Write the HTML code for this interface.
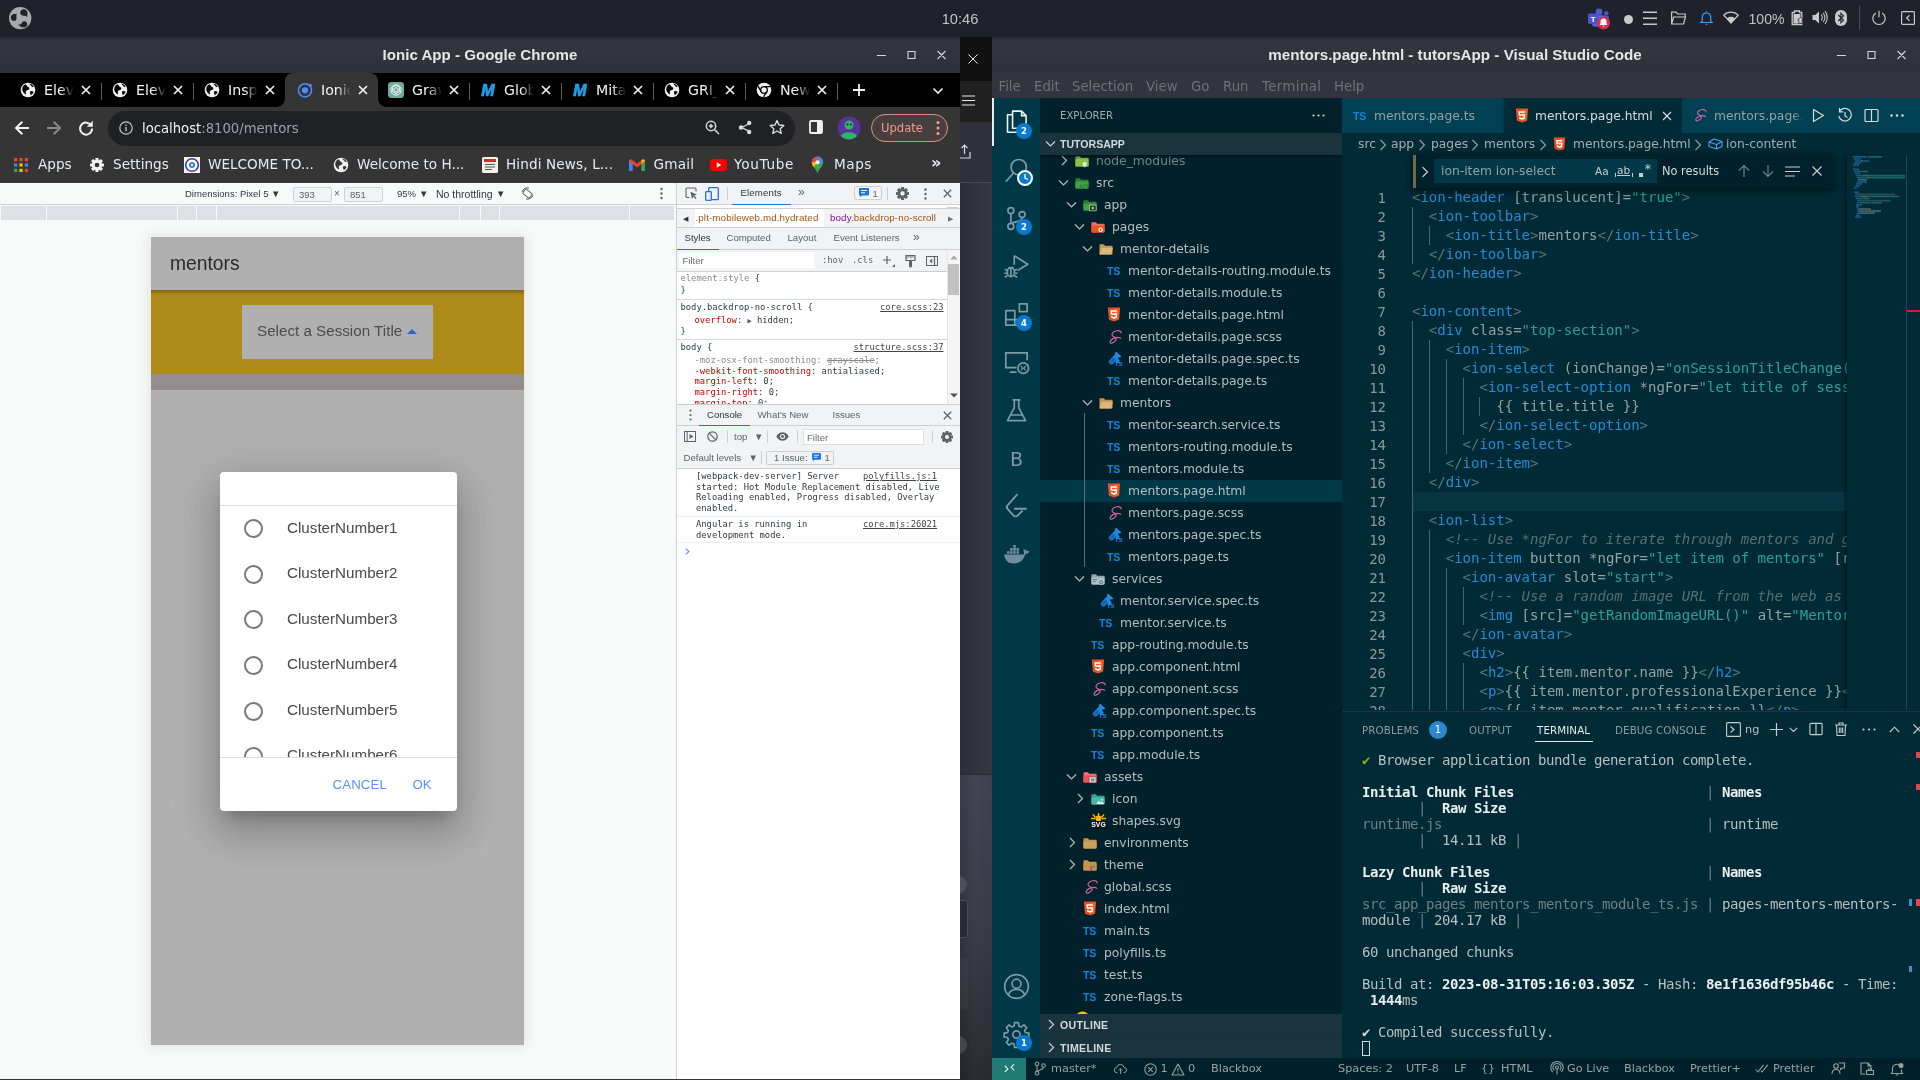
<!DOCTYPE html>
<html lang="en">
<head>
<meta charset="utf-8">
<title>Ionic App - Google Chrome</title>
<style>
*{box-sizing:border-box;margin:0;padding:0}
html,body{width:1920px;height:1080px;overflow:hidden;background:#1f212b}
body{position:relative;font-family:"DejaVu Sans","Liberation Sans",sans-serif;font-size:12.3px;color:#d8d8d8;-webkit-font-smoothing:antialiased}
.abs{position:absolute}
.ui{font-family:"DejaVu Sans","Liberation Sans",sans-serif}
.mono{font-family:"DejaVu Sans Mono","Liberation Mono",monospace}
.arial{font-family:"Liberation Sans","DejaVu Sans",sans-serif}
.nw{white-space:nowrap}
svg{display:block;overflow:visible}
/* top panel */
#panel{left:0;top:0;width:1920px;height:37px;background:#1f212b}
/* windows */
#chrome{left:0;top:37px;width:960px;height:1043px;background:#353535;overflow:hidden}
#strip{left:960px;top:37px;width:32px;height:1043px;background:#2f303b;overflow:hidden}
#vsc{left:992px;top:37px;width:928px;height:1043px;background:#002b36;overflow:hidden}
.tbar{left:0;top:0;width:100%;height:36px;background:linear-gradient(#282931 0,#33353f 3px,#2e303a 100%);color:#e6e6e6;font-weight:bold;text-align:center;white-space:nowrap}
</style>
</head>
<body>
<div id="root" style="position:absolute;left:0;top:0;width:1920px;height:1080px;will-change:transform">
<div id="panel" class="abs">
  <svg class="abs" style="left:9px;top:7px" width="23" height="23" viewBox="0 0 23 23">
    <circle cx="11.200" cy="11.100" r="11.200" fill="#a9a9ad"/>
    <path d="M14.700 2.300c2.200 0 3.700 1.700 3.700 3.700 0 1.500-.3 2.600-.1 4.200-1-1.300-1.800-1.500-3.600-1.500-2 0-3.500-1.400-3.500-3.200s1.500-3.200 3.500-3.200z" fill="#1f212b"/>
    <path d="M1.800 10.600c0-2 1.500-3.600 3.600-3.600 1 0 1.800.2 2.800-.2-.9 1.100-1.100 2-.7 3.600.5 1.900-.7 3.600-2.500 3.600S1.800 12.600 1.800 10.600z" fill="#1f212b"/>
    <path d="M13.400 20.300c-1.800 0-3.200-1.200-4.100-3.200 1.300.8 2.500.4 3.400-1.100.9-1.600 2.700-2.200 4.100-1.300s2 3 1 4.300c-.9 1.300-2.600 1.300-4.400 1.300z" fill="#1f212b"/>
  </svg>
  <div class="abs arial nw" style="left:930px;top:10px;width:60px;text-align:center;font-size:14.600px;color:#c3c4c8;line-height:18px">10:46</div>
  <!-- teams -->
  <svg class="abs" style="left:1587px;top:7px" width="25" height="23" viewBox="0 0 25 23">
    <circle cx="12" cy="5" r="3.4" fill="#5059c9"/>
    <circle cx="19.3" cy="6.2" r="2.3" fill="#4b53bc"/>
    <rect x="13" y="8.5" width="9" height="9" rx="2.5" fill="#4b53bc"/>
    <rect x="5" y="8.2" width="12.5" height="11.5" rx="3" fill="#5b62d3"/>
    <rect x="1" y="6.5" width="10.5" height="10.5" rx="1.5" fill="#4854c7"/>
    <text x="6.2" y="14.8" font-family="Liberation Sans,sans-serif" font-weight="bold" font-size="8" fill="#fff" text-anchor="middle">T</text>
    <circle cx="16.5" cy="16" r="6.5" fill="#e0294e"/>
    <path d="M16.5 11.6c-2 0-3 1.5-3 3.2v2l-1 1.3h8l-1-1.300v-2c0-1.700-1-3.200-3-3.200zM15.500 18.700a1 1 0 0 0 2 0z" fill="#fff"/>
  </svg>
  <div class="abs" style="left:1623.500px;top:14.500px;width:9.500px;height:9.500px;border-radius:50%;background:#c9c9cc"></div>
  <svg class="abs" style="left:1643px;top:10px" width="14" height="16" viewBox="0 0 14 16" stroke="#c9c9cc" stroke-width="1.500"><path d="M0 2.200h14M0 8.300h14M0 14.200h14"/></svg>
  <svg class="abs" style="left:1671px;top:11px" width="15" height="14" viewBox="0 0 15 14" fill="none" stroke="#c9c9cc" stroke-width="1.200"><path d="M.6 13V1.200h4.500l1.500 1.800h7.600v3M.6 13l2-7h11.800l-1.800 7z"/></svg>
  <svg class="abs" style="left:1700px;top:10px" width="13" height="15" viewBox="0 0 13 15" fill="none" stroke="#3d9cf0" stroke-width="1.200"><path d="M6.500 1.200v1M2.300 11V7.200c0-2.600 1.800-4.200 4.200-4.200s4.200 1.600 4.200 4.200V11l1.500 1.500H.8zM5.700 14.300h1.600"/></svg>
  <svg class="abs" style="left:1723px;top:11px" width="16" height="13" viewBox="0 0 16 13"><path d="M8 12.200L.8 4.200C2.800 2.200 5.300 1.200 8 1.200s5.200 1 7.200 3z" fill="none" stroke="#c9c9cc" stroke-width="1.200"/><path d="M8 12.200L3.800 7.500C5 6.400 6.400 5.800 8 5.800s3 .6 4.200 1.700z" fill="#c9c9cc"/></svg>
  <div class="abs arial nw" style="left:1748.500px;top:9.500px;font-size:14.100px;color:#c3c4c8;line-height:18px">100%</div>
  <svg class="abs" style="left:1791px;top:10px" width="13" height="15" viewBox="0 0 13 15"><path d="M3.500 1h5v1.500h2.300v12H1.200v-12h2.300z" fill="none" stroke="#c9c9cc" stroke-width="1.300"/><rect x="2.500" y="4" width="7" height="9.500" fill="#c9c9cc"/><path d="M9.500 7.500l3 2.500h-1.300v3.500h-3.400V10H6.500z" fill="#c9c9cc" stroke="#1f212b" stroke-width=".7"/></svg>
  <svg class="abs" style="left:1812px;top:10px" width="15" height="15" viewBox="0 0 15 15"><path d="M.5 5h2.700L7 1.500v12L3.200 10H.5z" fill="#c9c9cc"/><path d="M9 4.500c1.500 1.700 1.500 4.300 0 6M11 2.800c2.500 2.700 2.500 6.700 0 9.400M13 1.200c3 3.700 3 8.900 0 12.600" fill="none" stroke="#c9c9cc" stroke-width="1.100"/></svg>
  <svg class="abs" style="left:1834.500px;top:10px" width="12" height="16" viewBox="0 0 12 16"><rect x="0" y="0" width="12" height="16" rx="6" fill="#c9c9cc"/><path d="M3.300 5l5.200 5.300-2.600 2.500V3.200l2.600 2.500L3.300 11" fill="none" stroke="#1f212b" stroke-width="1.100"/></svg>
  <div class="abs" style="left:1859px;top:6px;width:1px;height:24px;background:#4a4c57"></div>
  <svg class="abs" style="left:1871.500px;top:10px" width="14" height="15" viewBox="0 0 14 15" fill="none" stroke="#c9c9cc" stroke-width="1.200"><path d="M7 .8v6.400M3.800 3A6.200 6.200 0 1 0 10.200 3"/></svg>
  <svg class="abs" style="left:1901px;top:11px" width="14" height="14" viewBox="0 0 14 14" fill="none" stroke="#c9c9cc" stroke-width="1.200"><rect x=".6" y=".6" width="12.800" height="12.800" rx="1"/><path d="M8.600 4.200L5.600 7l3 2.800"/></svg>
</div>
<div id="chrome" class="abs">
<style>
#chrome .tabs{left:0;top:36px;width:960px;height:34px;background:#000}
#chrome .tab{top:0;height:34px;width:92px}
#chrome .tab .fav{left:20px;top:9px;width:16px;height:16px}
#chrome .tab .tt{left:44px;top:7px;width:30px;height:20px;overflow:hidden;white-space:nowrap;font-size:14.2px;line-height:20px;color:#f1f1f1;-webkit-mask-image:linear-gradient(90deg,#000 55%,transparent 100%);mask-image:linear-gradient(90deg,#000 55%,transparent 100%)}
#chrome .tab .tx{left:80px;top:11px}
#chrome .tsep{top:10px;width:1px;height:17px;background:#5a5a5a}
#chrome .tool{left:0;top:70px;width:960px;height:40px;background:#353535}
#chrome .bm{left:0;top:110px;width:960px;height:36px;background:#353535;font-size:13.600px;color:#e8eaed;line-height:20px}
#chrome .bm span{position:absolute;top:7px;white-space:nowrap}
</style>
<div class="abs tbar arial" style="font-size:15.100px;line-height:36px">Ionic App - Google Chrome</div>
<svg class="abs" style="left:876px;top:12px" width="72" height="12" viewBox="0 0 72 12" fill="none" stroke="#d6d6d9" stroke-width="1.100"><path d="M1 6.500h9M32 2.500h7v7h-7zM61.500 2l8 8M69.500 2l-8 8"/></svg>
<div class="abs tabs">
  <!-- active tab -->
  <div class="abs" style="left:285px;top:0;width:93px;height:34px;background:#353535;border-radius:8px 8px 0 0"></div>
  <div class="abs" style="left:277px;top:26px;width:8px;height:8px;background:radial-gradient(circle at 0 0,#000 7.500px,#353535 8px)"></div>
  <div class="abs" style="left:378px;top:26px;width:8px;height:8px;background:radial-gradient(circle at 100% 0,#000 7.500px,#353535 8px)"></div>
<div class="abs tab" style="left:0px"><svg class="abs fav" viewBox="0 0 16 16"><circle cx="8" cy="8" r="7.300" fill="#f1f1f1"/><path d="M5.500 2.200c1.500.8 1.200 2.300 2.600 2.800 1.400.5 1.700 1.600.8 2.600-.9 1-2.400.4-3 1.600-.5 1.200.6 2.300-.2 3.200-1-.5-2.700-2-3.300-3.800C1.800 6 3 3.200 5.500 2.200zM10.200 9.500c1-.8 2.400-.3 3.400.5-.5 1.500-1.800 2.800-3 3.300.3-1.300-1.200-2.400-.4-3.800zM9.500 1.500c2 .4 3.500 1.800 4.200 3.500-1 .2-2-.3-2.600-1.200-.5-.8-1.500-1-1.600-2.300z" fill="#000"/></svg><div class="abs tt">Eleva</div><svg class="abs tx" width="12" height="12" viewBox="0 0 12 12" stroke="#f1f1f1" stroke-width="1.700"><path d="M2 2l8 8M10 2l-8 8"/></svg></div>
<div class="abs tab" style="left:92px"><svg class="abs fav" viewBox="0 0 16 16"><circle cx="8" cy="8" r="7.300" fill="#f1f1f1"/><path d="M5.500 2.200c1.500.8 1.200 2.300 2.600 2.800 1.400.5 1.700 1.600.8 2.600-.9 1-2.400.4-3 1.600-.5 1.200.6 2.300-.2 3.200-1-.5-2.700-2-3.300-3.800C1.800 6 3 3.200 5.500 2.200zM10.200 9.500c1-.8 2.400-.3 3.400.5-.5 1.500-1.800 2.800-3 3.300.3-1.300-1.200-2.400-.4-3.800zM9.500 1.500c2 .4 3.500 1.800 4.200 3.500-1 .2-2-.3-2.600-1.200-.5-.8-1.500-1-1.600-2.300z" fill="#000"/></svg><div class="abs tt">Eleva</div><svg class="abs tx" width="12" height="12" viewBox="0 0 12 12" stroke="#f1f1f1" stroke-width="1.700"><path d="M2 2l8 8M10 2l-8 8"/></svg></div>
<div class="abs tab" style="left:184px"><svg class="abs fav" viewBox="0 0 16 16"><circle cx="8" cy="8" r="7.300" fill="#f1f1f1"/><path d="M5.500 2.200c1.500.8 1.200 2.300 2.600 2.800 1.400.5 1.700 1.600.8 2.600-.9 1-2.400.4-3 1.600-.5 1.200.6 2.300-.2 3.200-1-.5-2.700-2-3.300-3.800C1.800 6 3 3.200 5.500 2.200zM10.200 9.500c1-.8 2.400-.3 3.400.5-.5 1.500-1.800 2.800-3 3.300.3-1.300-1.200-2.400-.4-3.800zM9.500 1.500c2 .4 3.500 1.800 4.200 3.500-1 .2-2-.3-2.600-1.200-.5-.8-1.500-1-1.600-2.300z" fill="#000"/></svg><div class="abs tt">Inspe</div><svg class="abs tx" width="12" height="12" viewBox="0 0 12 12" stroke="#f1f1f1" stroke-width="1.700"><path d="M2 2l8 8M10 2l-8 8"/></svg></div>
<div class="abs tab" style="left:277px"><svg class="abs fav" viewBox="0 0 16 16"><circle cx="8" cy="8.300" r="6.600" fill="none" stroke="#4d8dff" stroke-width="1.500"/><circle cx="8" cy="8.300" r="3.100" fill="#4d8dff"/><circle cx="13.300" cy="3.200" r="1.500" fill="#4d8dff"/></svg><div class="abs tt">Ionic</div><svg class="abs tx" width="12" height="12" viewBox="0 0 12 12" stroke="#f1f1f1" stroke-width="1.700"><path d="M2 2l8 8M10 2l-8 8"/></svg></div>
<div class="abs tab" style="left:368px"><svg class="abs fav" viewBox="0 0 16 16"><rect x="0" y="0" width="16" height="16" rx="3.500" fill="#74aa9c"/><g fill="none" stroke="#e9f3f0" stroke-width="1"><path d="M8 3.200l3.600 2.100v4.200L8 11.600 4.400 9.500V5.300z"/><path d="M8 5.500l2 1.200v2.400l-2 1.200-2-1.200V6.700z"/><circle cx="8" cy="8" r="5.200"/></g></svg><div class="abs tt">Grav</div><svg class="abs tx" width="12" height="12" viewBox="0 0 12 12" stroke="#f1f1f1" stroke-width="1.700"><path d="M2 2l8 8M10 2l-8 8"/></svg></div>
<div class="abs tab" style="left:460px"><svg class="abs fav" viewBox="0 0 16 16"><text x="8" y="13.500" text-anchor="middle" font-family="Liberation Sans,sans-serif" font-weight="bold" font-style="italic" font-size="16" fill="#1fa0ea" stroke="#1fa0ea" stroke-width=".7">M</text></svg><div class="abs tt">Glob</div><svg class="abs tx" width="12" height="12" viewBox="0 0 12 12" stroke="#f1f1f1" stroke-width="1.700"><path d="M2 2l8 8M10 2l-8 8"/></svg></div>
<div class="abs tab" style="left:552px"><svg class="abs fav" viewBox="0 0 16 16"><text x="8" y="13.500" text-anchor="middle" font-family="Liberation Sans,sans-serif" font-weight="bold" font-style="italic" font-size="16" fill="#1fa0ea" stroke="#1fa0ea" stroke-width=".7">M</text></svg><div class="abs tt">Mita</div><svg class="abs tx" width="12" height="12" viewBox="0 0 12 12" stroke="#f1f1f1" stroke-width="1.700"><path d="M2 2l8 8M10 2l-8 8"/></svg></div>
<div class="abs tab" style="left:644px"><svg class="abs fav" viewBox="0 0 16 16"><circle cx="8" cy="8" r="7.300" fill="#f1f1f1"/><path d="M5.500 2.200c1.500.8 1.200 2.300 2.600 2.800 1.400.5 1.700 1.600.8 2.600-.9 1-2.400.4-3 1.600-.5 1.200.6 2.300-.2 3.200-1-.5-2.700-2-3.300-3.800C1.800 6 3 3.200 5.500 2.200zM10.200 9.500c1-.8 2.400-.3 3.400.5-.5 1.500-1.800 2.800-3 3.300.3-1.300-1.200-2.400-.4-3.800zM9.500 1.500c2 .4 3.500 1.800 4.200 3.500-1 .2-2-.3-2.600-1.200-.5-.8-1.500-1-1.600-2.300z" fill="#000"/></svg><div class="abs tt">GRI_</div><svg class="abs tx" width="12" height="12" viewBox="0 0 12 12" stroke="#f1f1f1" stroke-width="1.700"><path d="M2 2l8 8M10 2l-8 8"/></svg></div>
<div class="abs tab" style="left:736px"><svg class="abs fav" viewBox="0 0 16 16"><circle cx="8" cy="8" r="7.300" fill="#f1f1f1"/><circle cx="8" cy="8" r="3.300" fill="#f1f1f1" stroke="#000" stroke-width="1.300"/><path d="M8 4.700h6.500M5.200 9.700L2 4.200M10.800 9.700L7.500 15" stroke="#000" stroke-width="1.300"/></svg><div class="abs tt">New </div><svg class="abs tx" width="12" height="12" viewBox="0 0 12 12" stroke="#f1f1f1" stroke-width="1.700"><path d="M2 2l8 8M10 2l-8 8"/></svg></div>
<div class="abs tsep" style="left:101px"></div>
<div class="abs tsep" style="left:193px"></div>
<div class="abs tsep" style="left:469px"></div>
<div class="abs tsep" style="left:561px"></div>
<div class="abs tsep" style="left:653px"></div>
<div class="abs tsep" style="left:745px"></div>
<div class="abs tsep" style="left:837px"></div>
<svg class="abs" style="left:852px;top:10px" width="14" height="14" viewBox="0 0 14 14" stroke="#f1f1f1" stroke-width="1.800"><path d="M7 1v12M1 7h12"/></svg>
<svg class="abs" style="left:932px;top:14px" width="12" height="8" viewBox="0 0 12 8" fill="none" stroke="#f1f1f1" stroke-width="1.600"><path d="M1.500 1.500L6 6l4.500-4.500"/></svg>
</div>
<div class="abs tool">
  <svg class="abs" style="left:14px;top:13px" width="16" height="16" viewBox="0 0 16 16" fill="none" stroke="#f1f1f1" stroke-width="2"><path d="M15 8H2.500M8.300 1.800L2 8l6.300 6.200"/></svg>
  <svg class="abs" style="left:46px;top:13px" width="16" height="16" viewBox="0 0 16 16" fill="none" stroke="#8a8a8a" stroke-width="2"><path d="M1 8h12.500M7.700 1.800L14 8l-6.300 6.200"/></svg>
  <svg class="abs" style="left:78px;top:13px" width="16" height="16" viewBox="0 0 16 16" fill="none" stroke="#f1f1f1" stroke-width="2"><path d="M13.300 5.800A6 6 0 1 0 14 8.500"/><path d="M14.800 .8v6H8.800z" fill="#f1f1f1" stroke="none"/></svg>
  <div class="abs" style="left:108px;top:4px;width:687px;height:35px;border-radius:17.500px;background:#202124"></div>
  <svg class="abs" style="left:119px;top:14px" width="14" height="14" viewBox="0 0 14 14"><circle cx="7" cy="7" r="6.200" fill="none" stroke="#c4c4c4" stroke-width="1.200"/><path d="M7 6v4.300M7 3.400v1.400" stroke="#c4c4c4" stroke-width="1.400"/></svg>
  <div class="abs nw" style="left:142px;top:12px;font-size:13.200px;line-height:20px;color:#f1f1f1">localhost<span style="color:#9aa0a6">:8100/mentors</span></div>
  <svg class="abs" style="left:705px;top:13px" width="15" height="15" viewBox="0 0 15 15" fill="none" stroke="#d9d9d9" stroke-width="1.500"><circle cx="6" cy="6" r="4.700"/><path d="M9.500 9.500L14 14M3.800 6h4.400M6 3.800v4.400"/></svg>
  <svg class="abs" style="left:738px;top:13px" width="14" height="15" viewBox="0 0 14 15"><path d="M10.800 4L3.600 7.500l7.200 3.600" fill="none" stroke="#d9d9d9" stroke-width="1.300"/><circle cx="11.200" cy="3" r="2.200" fill="#d9d9d9"/><circle cx="3" cy="7.500" r="2.200" fill="#d9d9d9"/><circle cx="11.200" cy="12" r="2.200" fill="#d9d9d9"/></svg>
  <svg class="abs" style="left:769px;top:12px" width="16" height="16" viewBox="0 0 16 16"><path d="M8 1.500l2 4.500 4.800.5-3.600 3.300 1 4.700L8 12l-4.200 2.500 1-4.700L1.200 6.500 6 6z" fill="none" stroke="#d9d9d9" stroke-width="1.400" stroke-linejoin="round"/></svg>
  <svg class="abs" style="left:809px;top:13px" width="14" height="14" viewBox="0 0 14 14"><rect x="1" y="1" width="12" height="12" rx="1" fill="none" stroke="#f1f1f1" stroke-width="1.800"/><rect x="8" y="1" width="5" height="12" fill="#f1f1f1"/></svg>
  <svg class="abs" style="left:837px;top:9px" width="24" height="24" viewBox="0 0 24 24"><circle cx="12" cy="12" r="11.500" fill="#5a2f9e"/><circle cx="12" cy="9" r="4.500" fill="#2db36a"/><path d="M4 20c1.500-5 14.500-5 16 0a11 11 0 0 1-16 0z" fill="#2db36a"/><circle cx="10.500" cy="8.500" r="1" fill="#123"/><circle cx="13.800" cy="8.500" r="1" fill="#123"/></svg>
  <div class="abs nw" style="left:871px;top:7px;width:77px;height:28px;border:1px solid #e08e84;border-radius:14px;background:rgba(238,154,143,.10);color:#ee9a8f;font-size:11.600px;line-height:26px;padding-left:9px">Update</div>
  <svg class="abs" style="left:936px;top:13px" width="4" height="16" viewBox="0 0 4 16" fill="#ee9a8f"><circle cx="2" cy="2.500" r="1.600"/><circle cx="2" cy="8" r="1.600"/><circle cx="2" cy="13.500" r="1.600"/></svg>
</div>
<div class="abs bm">
  <svg class="abs" style="left:14px;top:11px" width="14" height="14" viewBox="0 0 14 14"><g fill="#ea4335"><rect x="0" y="0" width="3.200" height="3.200"/><rect x="5.400" y="0" width="3.200" height="3.200"/><rect x="10.800" y="0" width="3.200" height="3.200"/></g><g><rect x="0" y="5.400" width="3.200" height="3.200" fill="#4285f4"/><rect x="5.400" y="5.400" width="3.200" height="3.200" fill="#fbbc05"/><rect x="10.800" y="5.400" width="3.200" height="3.200" fill="#4285f4"/><rect x="0" y="10.800" width="3.200" height="3.200" fill="#34a853"/><rect x="5.400" y="10.800" width="3.200" height="3.200" fill="#fbbc05"/><rect x="10.800" y="10.800" width="3.200" height="3.200" fill="#ea4335"/></g></svg>
  <span style="left:38px">Apps</span>
  <svg class="abs" style="left:90px;top:11px" width="14" height="14" viewBox="0 0 14 14"><g transform="translate(7 7)"><g fill="#f1f1f1"><rect x="-1.600" y="-7" width="3.200" height="14" rx=".6"/><rect x="-1.600" y="-7" width="3.200" height="14" rx=".6" transform="rotate(45)"/><rect x="-1.600" y="-7" width="3.200" height="14" rx=".6" transform="rotate(90)"/><rect x="-1.600" y="-7" width="3.200" height="14" rx=".6" transform="rotate(135)"/><circle r="5.200"/></g><circle r="2.300" fill="#353535"/></g></svg>
  <span style="left:113px">Settings</span>
  <svg class="abs" style="left:184px;top:10px" width="16" height="16" viewBox="0 0 16 16"><rect width="16" height="16" fill="#f4f4f8"/><circle cx="8" cy="8" r="6.300" fill="#fff" stroke="#3a3fa0" stroke-width="1.600"/><circle cx="8" cy="8" r="3" fill="#2f7fd6"/><circle cx="8" cy="8" r="1.200" fill="#fff"/></svg>
  <span style="left:208px">WELCOME TO...</span>
  <svg class="abs" style="left:333px;top:10px" width="16" height="16" viewBox="0 0 16 16"><circle cx="8" cy="8" r="7.300" fill="#f1f1f1"/><path d="M5.500 2.200c1.500.8 1.200 2.300 2.600 2.800 1.400.5 1.700 1.600.8 2.600-.9 1-2.400.4-3 1.600-.5 1.200.6 2.300-.2 3.200-1-.5-2.700-2-3.300-3.800C1.800 6 3 3.200 5.500 2.200zM10.200 9.500c1-.8 2.400-.3 3.400.5-.5 1.500-1.800 2.800-3 3.300.3-1.300-1.200-2.400-.4-3.800zM9.500 1.500c2 .4 3.500 1.800 4.200 3.500-1 .2-2-.3-2.600-1.200-.5-.8-1.500-1-1.600-2.300z" fill="#353535"/></svg>
  <span style="left:357px">Welcome to H...</span>
  <svg class="abs" style="left:482px;top:10px" width="16" height="16" viewBox="0 0 16 16"><rect width="16" height="16" rx="1.500" fill="#f3efe9"/><rect x="2" y="2" width="12" height="3" fill="#c33"/><path d="M3 7.500h10M3 10h10M3 12.500h7" stroke="#555" stroke-width="1.200"/></svg>
  <span style="left:506px;letter-spacing:.12px">Hindi News, L...</span>
  <svg class="abs" style="left:629px;top:12px" width="16" height="12" viewBox="0 0 16 12"><path d="M0 12V1.500L1.800 0 8 4.800 14.200 0 16 1.500V12h-3.500V5L8 8.500 3.500 5v7z" fill="#ea4335"/><path d="M0 12V1.500L3.500 5v7z" fill="#4285f4"/><path d="M16 12V1.500L12.500 5v7z" fill="#34a853"/><path d="M12.500 5L16 1.500 14.200 0 12.500 1.300z" fill="#fbbc05"/></svg>
  <span style="left:653.500px;letter-spacing:.2px">Gmail</span>
  <svg class="abs" style="left:710px;top:12px" width="17" height="12" viewBox="0 0 17 12"><rect width="17" height="12" rx="3.200" fill="#f00"/><path d="M6.800 3.200L11.300 6 6.800 8.800z" fill="#fff"/></svg>
  <span style="left:734px;letter-spacing:.7px">YouTube</span>
  <svg class="abs" style="left:811px;top:9px" width="13" height="18" viewBox="0 0 13 18"><path d="M6.500 17.500C5.500 13 .8 10.500.8 6.300a5.700 5.700 0 0 1 11.400 0c0 4.200-4.700 6.700-5.700 11.200z" fill="#34a853"/><path d="M6.500.6A5.700 5.700 0 0 0 .8 6.300L6.500 6.300z" fill="#ea4335"/><path d="M6.500.6a5.700 5.700 0 0 1 5.700 5.700H6.500z" fill="#4285f4"/><path d="M.8 6.300c0 1.800.9 3.300 2 4.700l3.700-4.700z" fill="#fbbc05"/><circle cx="6.500" cy="6.300" r="2.100" fill="#fff"/></svg>
  <span style="left:834px;letter-spacing:.55px">Maps</span>
  <span style="left:931px;top:6px;font-size:16px;font-weight:bold">»</span>
</div>
<div class="abs" style="left:0;top:145px;width:960px;height:1px;background:#3c3c3c"></div>
<style>
#emu{left:0;top:146px;width:677px;height:896px;background:#f8f9f9;overflow:hidden;color:#303942}
#emu .dt{left:0;top:0;width:676px;height:22px;background:#f8f9f9;border-bottom:1px solid #cdcfd3;font-family:"Liberation Sans",sans-serif;font-size:9.500px;line-height:22px;color:#303942}
#emu .dt span{position:absolute;top:0;white-space:nowrap}
#emu .inp{top:3.500px;width:39px;height:15px;border:1px solid #d0d3d6;border-radius:2px;background:#f1f3f4;font-family:"Liberation Sans",sans-serif;font-size:9.500px;line-height:13px;padding-left:5px;color:#5f6368}
#emu .mq{left:1px;top:23px;width:673px;height:14px;background:#dee1e6}
#emu .mq i{position:absolute;top:0;width:1px;height:14px;background:#fbfbfc}
#phone{left:151px;top:90px;width:373px;height:808px;background:#b0b0b0;overflow:hidden;box-shadow:0 0 12px 2px rgba(0,0,0,.09)}
#phone .lbl{font-size:15.200px;color:#4a4a4a;white-space:nowrap;line-height:20px}
#phone .rad{left:24px;width:19px;height:19px;border-radius:50%;border:2px solid #7a7a7a}
</style>
<div id="emu" class="abs">
  <div class="abs dt" style="top:0">
    <span style="left:185px">Dimensions: Pixel 5</span><span style="left:271px;font-size:9.500px">▼</span>
    <div class="abs inp" style="left:293px">393</div>
    <span style="left:334px;font-size:10px;color:#5f6368">×</span>
    <div class="abs inp" style="left:344px">851</div>
    <span style="left:397px">95%</span><span style="left:419px;font-size:9.500px">▼</span>
    <span style="left:436px;font-size:10.500px">No throttling</span><span style="left:496px;font-size:9.500px">▼</span>
    <svg class="abs" style="left:521px;top:4px" width="13" height="13" viewBox="0 0 13 13" fill="none" stroke="#5f6368" stroke-width="1"><rect x="2.300" y="3.800" width="8.500" height="5.500" rx="1" transform="rotate(40 6.500 6.500)"/><path d="M1 5A5.800 5.800 0 0 1 8 1M12 8a5.800 5.800 0 0 1-7 4"/></svg>
    <svg class="abs" style="left:660px;top:4px" width="3" height="13" viewBox="0 0 3 13" fill="#5f6368"><circle cx="1.500" cy="2" r="1.200"/><circle cx="1.500" cy="6.500" r="1.200"/><circle cx="1.500" cy="11" r="1.200"/></svg>
  </div>
  <div class="abs mq" style="top:23px"><i style="left:45px"></i><i style="left:176px"></i><i style="left:195px"></i><i style="left:215px"></i><i style="left:458px"></i><i style="left:479px"></i><i style="left:498px"></i><i style="left:628px"></i></div>
  <div id="phone" class="abs arial" style="top:54px">
    <!-- app header -->
    <div class="abs" style="left:0;top:0;width:373px;height:53px;background:#b0b0b0"></div>
    <div class="abs nw" style="left:19px;top:14px;font-size:19.300px;line-height:26px;color:#2b2b2b">mentors</div>
    <!-- gold section -->
    <div class="abs" style="left:0;top:53px;width:373px;height:84px;background:#ad8a1a"></div>
    <div class="abs" style="left:0;top:53px;width:373px;height:5px;background:linear-gradient(rgba(60,40,0,.38),rgba(60,40,0,0))"></div>
    <div class="abs" style="left:91px;top:68px;width:191px;height:54px;background:#b0b0b0"></div>
    <div class="abs lbl" style="left:106px;top:84px;color:#4c4c4c">Select a Session Title</div>
    <svg class="abs" style="left:255.500px;top:92px" width="10" height="5" viewBox="0 0 10 5"><path d="M0 5L5 0l5 5z" fill="#3465c4"/></svg>
    <div class="abs" style="left:0;top:137px;width:373px;height:16px;background:#958d8d"></div>
    <!-- dialog -->
    <div class="abs" style="left:69px;top:234.500px;width:237px;height:339px;background:#fff;border-radius:4px;box-shadow:0 10.500px 14px -6.600px rgba(0,0,0,.2),0 23px 36px 3px rgba(0,0,0,.14),0 8.500px 44px 7.600px rgba(0,0,0,.12)"></div>
    <div class="abs" style="left:69px;top:268px;width:237px;height:1px;background:#dcdcdc"></div>
    <div class="abs" style="left:69px;top:269px;width:237px;height:251px;overflow:hidden">
      <div class="abs rad" style="top:13px"></div><div class="abs lbl" style="left:67px;top:12px">ClusterNumber1</div>
      <div class="abs rad" style="top:58.500px"></div><div class="abs lbl" style="left:67px;top:57px">ClusterNumber2</div>
      <div class="abs rad" style="top:104px"></div><div class="abs lbl" style="left:67px;top:103px">ClusterNumber3</div>
      <div class="abs rad" style="top:149.500px"></div><div class="abs lbl" style="left:67px;top:148px">ClusterNumber4</div>
      <div class="abs rad" style="top:195.500px"></div><div class="abs lbl" style="left:67px;top:194px">ClusterNumber5</div>
      <div class="abs rad" style="top:241px"></div><div class="abs lbl" style="left:67px;top:239px">ClusterNumber6</div>
    </div>
    <div class="abs" style="left:69px;top:519.500px;width:237px;height:1px;background:#dcdcdc"></div>
    <div class="abs nw" style="left:181.500px;top:539px;font-size:13.300px;line-height:18px;color:#5594f8;letter-spacing:.1px">CANCEL</div>
    <div class="abs nw" style="left:261.500px;top:539px;font-size:13.300px;line-height:18px;color:#5594f8">OK</div>
  </div>
  <div class="abs" style="left:676px;top:-1px;width:1px;height:898px;background:#cdcfd3"></div>
</div>
<style>
#dv{left:677px;top:146px;width:283px;height:896px;background:#fff;overflow:hidden;font-family:"Liberation Sans",sans-serif;font-size:9.600px;color:#5f6368;line-height:12px}
#dv .bar{left:0;width:283px;background:#f1f3f4;border-bottom:1px solid #cdcfd3}
#dv span{position:absolute;white-space:nowrap}
#dv .m{font-family:"DejaVu Sans Mono","Liberation Mono",monospace;font-size:8.800px;line-height:11px;color:#303942}
#dv .vs{width:1px;height:13px;background:#cdcfd3}
#dv .hl{left:0;width:270px;height:1px;background:#d5d8dc}
#dv .red{color:#c80000}
#dv .lnk{color:#444;text-decoration:underline}
</style>
<div id="dv" class="abs">
  <!-- main toolbar -->
  <div class="abs bar" style="top:0;height:21.500px"></div>
  <svg class="abs" style="left:8px;top:4px" width="13" height="13" viewBox="0 0 13 13"><path d="M11 4.500V2a1 1 0 0 0-1-1H2a1 1 0 0 0-1 1v7.500a1 1 0 0 0 1 1h2.500" fill="none" stroke="#5f6368" stroke-width="1.100"/><path d="M5.500 4.800l6.500 2.700-2.800 1 2.300 2.500-1 .9-2.300-2.500-1.400 2.500z" fill="#5f6368"/></svg>
  <svg class="abs" style="left:28px;top:3.500px" width="14" height="14" viewBox="0 0 14 14"><rect x="3.700" y=".700" width="9.600" height="12" rx="1" fill="none" stroke="#1a73e8" stroke-width="1.300"/><rect x=".700" y="4.700" width="5.600" height="8.600" rx=".8" fill="#f1f3f4" stroke="#1a73e8" stroke-width="1.300"/></svg>
  <div class="abs vs" style="left:50px;top:4px"></div>
  <span style="left:63.500px;top:4px;color:#333;letter-spacing:.15px">Elements</span>
  <div class="abs" style="left:55px;top:20.500px;width:59px;height:1px;background:#1a73e8"></div>
  <span style="left:121px;top:2.500px;font-size:12px">»</span>
  <div class="abs" style="left:176.500px;top:2.500px;width:28px;height:14px;border:1px solid #cdcfd3;border-radius:2px"></div>
  <svg class="abs" style="left:182px;top:5px" width="10" height="9" viewBox="0 0 10 9"><path d="M1 0h8a1 1 0 0 1 1 1v5.500a1 1 0 0 1-1 1H3.500L1.200 9V7.500H1a1 1 0 0 1-1-1V1a1 1 0 0 1 1-1z" fill="#1a73e8"/><path d="M2 2.500h6M2 4.800h4" stroke="#fff" stroke-width="1"/></svg>
  <span style="left:195.500px;top:4.500px;color:#5f6368">1</span>
  <div class="abs vs" style="left:210px;top:4px"></div>
  <svg class="abs" style="left:218.500px;top:4px" width="13" height="13" viewBox="0 0 14 14"><g transform="translate(7 7)"><g fill="#5f6368"><rect x="-1.700" y="-7" width="3.400" height="14" rx=".6"/><rect x="-1.700" y="-7" width="3.400" height="14" rx=".6" transform="rotate(45)"/><rect x="-1.700" y="-7" width="3.400" height="14" rx=".6" transform="rotate(90)"/><rect x="-1.700" y="-7" width="3.400" height="14" rx=".6" transform="rotate(135)"/><circle r="5.200"/></g><circle r="2.300" fill="#f1f3f4"/></g></svg>
  <svg class="abs" style="left:246.500px;top:5px" width="3" height="12" viewBox="0 0 3 12" fill="#5f6368"><circle cx="1.500" cy="1.500" r="1.200"/><circle cx="1.500" cy="6" r="1.200"/><circle cx="1.500" cy="10.500" r="1.200"/></svg>
  <svg class="abs" style="left:265.500px;top:6px" width="9" height="9" viewBox="0 0 9 9" stroke="#5f6368" stroke-width="1.300"><path d="M.8.800l7.400 7.400M8.200.800L.8 8.200"/></svg>
  <!-- collapsed elements strip -->
  <div class="abs" style="left:0;top:22.500px;width:283px;height:2.500px;background:#fff"></div>
  <div class="abs" style="left:270px;top:23.500px;width:11px;height:1px;background:#cdcfd3"></div>
  <!-- breadcrumbs -->
  <div class="abs bar" style="top:25px;height:20px;border-top:1px solid #cdcfd3"></div>
  <div class="abs" style="left:18px;top:26px;width:129px;height:18px;background:#fff"></div>
  <span style="left:6px;top:29.500px;font-size:7px;color:#333">◀</span>
  <span style="left:18.500px;top:29px;font-size:9.800px;color:#a5540f;letter-spacing:.1px">.plt-mobileweb.md.hydrated</span>
  <span style="left:153px;top:29px;font-size:9.800px;color:#a5540f;letter-spacing:.1px"><b style="font-weight:normal;color:#881280">body</b>.backdrop-no-scroll</span>
  <span style="left:271px;top:29.500px;font-size:7px;color:#777">▶</span>
  <!-- styles tabs -->
  <div class="abs bar" style="top:45px;height:21.500px"></div>
  <span style="left:7.500px;top:48.500px;color:#333">Styles</span>
  <div class="abs" style="left:0;top:65.500px;width:42px;height:1px;background:#1a73e8"></div>
  <span style="left:49.500px;top:48.500px">Computed</span>
  <span style="left:110.500px;top:48.500px">Layout</span>
  <span style="left:156.500px;top:48.500px">Event Listeners</span>
  <span style="left:236px;top:47.500px;font-size:12px">»</span>
  <!-- filter row -->
  <div class="abs bar" style="top:66.500px;height:22px"></div>
  <div class="abs" style="left:2px;top:69px;width:135px;height:16px;background:#fff"></div>
  <span style="left:5.500px;top:71.500px;color:#6b7075">Filter</span>
  <span class="m" style="left:145px;top:72px;color:#5f6368">:hov</span>
  <span class="m" style="left:175px;top:72px;color:#5f6368">.cls</span>
  <svg class="abs" style="left:206px;top:72.500px" width="12" height="11" viewBox="0 0 12 11" stroke="#5f6368" stroke-width="1.200"><path d="M4 0v8M0 4h8"/><path d="M12 8v3H9z" fill="#5f6368" stroke="none"/></svg>
  <svg class="abs" style="left:228px;top:71.500px" width="11" height="12" viewBox="0 0 11 12"><path d="M1 .5h9v5H1z" fill="none" stroke="#5f6368" stroke-width="1.200"/><path d="M2 .5v3M4 .5v2M6 .5v3M8 .5v2" stroke="#5f6368" stroke-width=".9"/><path d="M4 5.500h3v5.500a1.500 1.500 0 0 1-3 0z" fill="#5f6368"/></svg>
  <svg class="abs" style="left:249px;top:72.500px" width="12" height="10" viewBox="0 0 12 10"><rect x=".5" y=".5" width="11" height="9" fill="none" stroke="#5f6368" stroke-width="1"/><path d="M8.500 .5v9" stroke="#5f6368" stroke-width="1.200"/><path d="M6.300 2.800v4.400L3.300 5z" fill="#5f6368"/></svg>
  <!-- styles content -->
  <span class="m" style="left:3.500px;top:89.5px;color:#8a8a8a">element.style <b style="font-weight:normal;color:#303942">{</b></span>
  <span class="m" style="left:3.500px;top:102px">}</span>
  <div class="abs hl" style="top:116px"></div>
  <span class="m" style="left:3.500px;top:118.5px">body.backdrop-no-scroll {</span>
  <span class="m lnk" style="left:203px;top:118.5px">core.scss:23</span>
  <span class="m" style="left:17.500px;top:131.5px"><b style="font-weight:normal" class="red">overflow</b>: <i style="font-style:normal;font-size:7px;color:#555">▶</i> hidden;</span>
  <span class="m" style="left:3.500px;top:142.5px">}</span>
  <div class="abs hl" style="top:156px"></div>
  <span class="m" style="left:3.500px;top:158.5px">body {</span>
  <span class="m lnk" style="left:176.500px;top:158.5px">structure.scss:37</span>
  <span class="m" style="left:17.500px;top:171.5px;color:#8a8a8a">-moz-osx-font-smoothing: <s>grayscale</s>;</span>
  <span class="m" style="left:17.500px;top:182.5px"><b style="font-weight:normal" class="red">-webkit-font-smoothing</b>: antialiased;</span>
  <span class="m" style="left:17.500px;top:193px"><b style="font-weight:normal" class="red">margin-left</b>: 0;</span>
  <span class="m" style="left:17.500px;top:204px"><b style="font-weight:normal" class="red">margin-right</b>: 0;</span>
  <span class="m" style="left:17.500px;top:214.5px"><b style="font-weight:normal" class="red">margin-top</b>: 0;</span>
  <!-- scrollbar -->
  <div class="abs" style="left:270px;top:67.500px;width:13px;height:153px;background:#f5f5f5;border-left:1px solid #e4e4e4"></div>
  <svg class="abs" style="left:272.500px;top:71.500px" width="8" height="5" viewBox="0 0 8 5"><path d="M0 4.500L4 .5l4 4z" fill="#a8a8a8"/></svg>
  <div class="abs" style="left:271px;top:81px;width:11px;height:31px;background:#c1c1c1"></div>
  <svg class="abs" style="left:272.500px;top:209.500px" width="8" height="5" viewBox="0 0 8 5"><path d="M0 .5L4 4.500l4-4z" fill="#505050"/></svg>
  <!-- drawer -->
  <div class="abs bar" style="top:220.500px;height:22.500px;border-top:1px solid #cdcfd3"></div>
  <svg class="abs" style="left:12px;top:226px" width="3" height="12" viewBox="0 0 3 12" fill="#5f6368"><circle cx="1.500" cy="1.500" r="1.100"/><circle cx="1.500" cy="6" r="1.100"/><circle cx="1.500" cy="10.500" r="1.100"/></svg>
  <span style="left:30px;top:225.500px;color:#333">Console</span>
  <div class="abs" style="left:22px;top:241.500px;width:51px;height:1px;background:#1a73e8"></div>
  <span style="left:80.500px;top:225.500px">What's New</span>
  <span style="left:155.500px;top:225.500px">Issues</span>
  <svg class="abs" style="left:265.500px;top:227.500px" width="9" height="9" viewBox="0 0 9 9" stroke="#5f6368" stroke-width="1.300"><path d="M.8.800l7.400 7.400M8.200.800L.8 8.200"/></svg>
  <!-- console toolbar -->
  <div class="abs bar" style="top:243px;height:21px;border-bottom:none"></div>
  <svg class="abs" style="left:6.500px;top:248px" width="12" height="11" viewBox="0 0 12 11"><rect x=".5" y=".5" width="11" height="10" fill="none" stroke="#5f6368" stroke-width="1"/><path d="M3.200 .5v10" stroke="#5f6368" stroke-width="1"/><path d="M5.500 3v5l4-2.500z" fill="#5f6368"/></svg>
  <svg class="abs" style="left:29.500px;top:248px" width="11" height="11" viewBox="0 0 11 11" fill="none" stroke="#5f6368" stroke-width="1.200"><circle cx="5.500" cy="5.500" r="4.700"/><path d="M2.200 2.200l6.600 6.600"/></svg>
  <div class="abs vs" style="left:50px;top:247px"></div>
  <span style="left:57px;top:247.500px">top</span>
  <span style="left:77px;top:248px;font-size:9.500px">▼</span>
  <div class="abs vs" style="left:90px;top:247px"></div>
  <svg class="abs" style="left:99px;top:249px" width="13" height="9" viewBox="0 0 13 9"><path d="M.3 4.500C1.800 1.700 4 .3 6.500.3s4.700 1.400 6.200 4.200C11.200 7.300 9 8.700 6.500 8.700S1.800 7.300.3 4.500z" fill="#5f6368"/><circle cx="6.500" cy="4.500" r="2.500" fill="#f1f3f4"/><circle cx="6.500" cy="4.500" r="1.400" fill="#5f6368"/></svg>
  <div class="abs vs" style="left:120px;top:247px"></div>
  <div class="abs" style="left:125.500px;top:246px;width:121px;height:16px;background:#fff;border:1px solid #dcdfe3"></div>
  <span style="left:130px;top:248.500px;color:#6b7075">Filter</span>
  <div class="abs vs" style="left:255px;top:247px"></div>
  <svg class="abs" style="left:264px;top:247.500px" width="12" height="12" viewBox="0 0 14 14"><g transform="translate(7 7)"><g fill="#5f6368"><rect x="-1.700" y="-7" width="3.400" height="14" rx=".6"/><rect x="-1.700" y="-7" width="3.400" height="14" rx=".6" transform="rotate(45)"/><rect x="-1.700" y="-7" width="3.400" height="14" rx=".6" transform="rotate(90)"/><rect x="-1.700" y="-7" width="3.400" height="14" rx=".6" transform="rotate(135)"/><circle r="5.200"/></g><circle r="2.300" fill="#f1f3f4"/></g></svg>
  <div class="abs bar" style="top:264px;height:22px"></div>
  <span style="left:6.500px;top:268.500px">Default levels</span>
  <span style="left:71.500px;top:269px;font-size:9.500px">▼</span>
  <div class="abs vs" style="left:84px;top:268px"></div>
  <div class="abs" style="left:88.500px;top:267.500px;width:68px;height:14px;border:1px solid #cdcfd3;border-radius:2px"></div>
  <span style="left:97px;top:268.500px">1 Issue:</span>
  <svg class="abs" style="left:135px;top:270px" width="9" height="8" viewBox="0 0 10 9"><path d="M1 0h8a1 1 0 0 1 1 1v5.500a1 1 0 0 1-1 1H3.500L1.200 9V7.500H1a1 1 0 0 1-1-1V1a1 1 0 0 1 1-1z" fill="#1a73e8"/><path d="M2 2.500h6M2 4.800h4" stroke="#fff" stroke-width="1"/></svg>
  <span style="left:147.500px;top:268.500px">1</span>
  <!-- messages -->
  <span class="m" style="left:19px;top:288px;line-height:10.600px;white-space:pre">[webpack-dev-server] Server
started: Hot Module Replacement disabled, Live
Reloading enabled, Progress disabled, Overlay
enabled.</span>
  <span class="m lnk" style="left:186px;top:288px">polyfills.js:1</span>
  <div class="abs" style="left:0;top:333px;width:283px;height:1px;background:#f0f0f0"></div>
  <span class="m" style="left:19px;top:336px;line-height:10.600px;white-space:pre">Angular is running in
development mode.</span>
  <span class="m lnk" style="left:186px;top:336px">core.mjs:26021</span>
  <div class="abs" style="left:0;top:358.500px;width:283px;height:1px;background:#f0f0f0"></div>
  <svg class="abs" style="left:8px;top:365px" width="5" height="7" viewBox="0 0 5 7" fill="none" stroke="#5b8def" stroke-width="1.100"><path d="M.7.700L4 3.500.7 6.300"/></svg>
</div>
</div><!-- /chrome -->
<div id="strip" class="abs" style="background:linear-gradient(90deg,#2c2d37,#363741)">
  <div class="abs" style="left:0;top:737px;width:32px;height:306px;background:linear-gradient(90deg,rgba(0,0,0,.16),rgba(0,0,0,0) 45%,rgba(0,0,0,.06)),linear-gradient(180deg,#434554 0%,#3b3d49 50%,#2b2c33 100%);border-top:1px solid #2a2b33"></div>
  <div class="abs" style="left:-11px;top:839px;width:18px;height:18px;border-radius:50%;background:#4c4e5a"></div>
  <div class="abs" style="left:-6px;top:863px;width:14px;height:38px;border-radius:3px;background:#2a2b35;border:1px solid #4a4c58"></div>
  <div class="abs" style="left:-6px;top:921px;width:14px;height:52px;border-radius:4px;background:rgba(255,255,255,.035)"></div>
  <div class="abs" style="left:-11px;top:999px;width:18px;height:18px;border-radius:50%;background:#43454f"></div>
  <div class="abs" style="left:0;top:0;width:32px;height:44px;background:#111112"></div>
  <svg class="abs" style="left:8px;top:16.500px" width="10" height="10" viewBox="0 0 11 11" stroke="#e8e8e8" stroke-width="1.100"><path d="M.5.500l10 10M10.500.500l-10 10"/></svg>
  <div class="abs" style="left:0;top:44px;width:32px;height:41px;background:#202021"></div>
  <svg class="abs" style="left:1.500px;top:58px" width="13" height="11" viewBox="0 0 13 11" stroke="#e8e8e8" stroke-width="1.200"><path d="M0 1h13M0 5.500h13M0 10h13"/></svg>
  <div class="abs" style="left:0;top:85px;width:32px;height:60px;background:#2f303b"></div>
  <svg class="abs" style="left:-1px;top:107px" width="12" height="15" viewBox="0 0 12 15" fill="none" stroke="#d8d8dc" stroke-width="1.200"><path d="M0 8v6h11V8M5.500 10V1M2.500 4l3-3 3 3"/></svg>
  <div class="abs" style="left:0;top:145px;width:32px;height:1px;background:#454753"></div>
</div>
<div id="vsc" class="abs">
<style>
#vsc .menu{left:0;top:35.500px;width:928px;height:25.500px;background:#33343d;color:#707178;font-size:13.300px;line-height:27px}
#vsc .menu span{position:absolute;top:0;white-space:nowrap}
#vsc .act{left:0;top:61px;width:48px;height:960px;background:#003847}
#vsc .act svg{position:absolute;left:12px}
#vsc .bdg{position:absolute;left:24px;width:16px;height:16px;border-radius:50%;background:#0a7ad1;color:#fff;font-size:8.500px;font-weight:bold;line-height:16px;text-align:center}
#vsc .sb{left:0;top:1021px;width:928px;height:22px;background:#00212b;color:#93a1a1;font-size:11.300px;line-height:21px}
#vsc .sb span{position:absolute;top:0;white-space:nowrap}
#vsc .sb svg{position:absolute}
</style>
<div class="abs tbar arial" style="font-size:15.200px;line-height:36px;height:35.500px;text-indent:-2px">mentors.page.html - tutorsApp - Visual Studio Code</div>
<svg class="abs" style="left:844px;top:12px" width="72" height="12" viewBox="0 0 72 12" fill="none" stroke="#d6d6d9" stroke-width="1.100"><path d="M1 6.500h9M32 2.500h7v7h-7zM61.500 2l8 8M69.500 2l-8 8"/></svg>
<div class="abs menu"><span style="left:6.500px">File</span><span style="left:42px">Edit</span><span style="left:80px">Selection</span><span style="left:154px">View</span><span style="left:199px">Go</span><span style="left:231px">Run</span><span style="left:270px;letter-spacing:.4px">Terminal</span><span style="left:342px">Help</span></div>
<!-- activity bar -->
<div class="abs act">
  <div class="abs" style="left:0;top:0;width:2px;height:48px;background:#e8eded"></div>
  <!-- files -->
  <svg style="top:10px;left:11px" width="27" height="27" viewBox="0 0 24 24" fill="none" stroke="#f2f5f5" stroke-width="1.400" stroke-linejoin="round"><path d="M8.500 6V2.800h8l4 4V18H8.500z"/><path d="M16.500 2.800v4h4"/><path d="M8.500 6H4v15.500h10.500V18"/></svg>
  <div class="bdg" style="top:24.5px">2</div>
  <!-- search -->
  <svg style="top:58.5px;left:10.500px" width="27" height="27" viewBox="0 0 24 24" fill="none" stroke="#7c9aa5" stroke-width="1.500"><circle cx="14" cy="9" r="6.800"/><path d="M9.500 14L2.500 22"/></svg>
  <div class="bdg" style="top:72px;background:#0a7ad1;border:2px solid #fff;left:24.500px;width:16px;height:16px"></div>
  <svg style="top:75px;left:28.500px" width="9" height="9" viewBox="0 0 9 9" fill="none" stroke="#fff" stroke-width="1.300"><path d="M4 1v4l3 1.500"/></svg>
  <!-- scm -->
  <svg style="top:106.5px;left:10.500px" width="27" height="27" viewBox="0 0 24 24" fill="none" stroke="#7c9aa5" stroke-width="1.500"><circle cx="7" cy="5" r="2.600"/><circle cx="7" cy="19" r="2.600"/><circle cx="17" cy="8.500" r="2.600"/><path d="M7 7.600v8.800M17 11.100c0 4-6 3-9.500 5.500"/></svg>
  <div class="bdg" style="top:120.5px">2</div>
  <!-- debug -->
  <svg style="top:154.5px;left:10.500px" width="27" height="27" viewBox="0 0 24 24" fill="none" stroke="#7c9aa5" stroke-width="1.500" stroke-linejoin="round"><path d="M10 2.500L22 10l-9 5.500M10 2.500v8"/><ellipse cx="7" cy="17" rx="3.200" ry="4"/><path d="M7 13v8M1.500 14.500l2.500 1M1 18h2.800M1.500 21.500l2.500-1.500M12.500 14.500l-2.500 1M13 18h-2.800M12.500 21.500L10 20M5 12.500l1 1M9 12.500l-1 1"/></svg>
  <!-- extensions -->
  <svg style="top:202.5px;left:10.500px" width="27" height="27" viewBox="0 0 24 24" fill="none" stroke="#7c9aa5" stroke-width="1.500" stroke-linejoin="round"><path d="M2.500 8.500h8v8h-8zM10.500 16.500h8v5h-16v-5M10.500 8.500v13M14.500 2.500h7v7h-7z"/></svg>
  <div class="bdg" style="top:216.5px">4</div>
  <!-- remote explorer -->
  <svg style="top:250.5px;left:10.500px" width="27" height="27" viewBox="0 0 24 24" fill="none" stroke="#7c9aa5" stroke-width="1.500"><path d="M12 16.500H2.500v-13h19V10M6 20.500h6"/><circle cx="18" cy="17" r="4.700"/><path d="M16 15l1.500 2-1.500 2M20 15l-1.500 2 1.500 2" stroke-width="1"/></svg>
  <!-- flask -->
  <svg style="top:298.5px;left:10.500px" width="27" height="27" viewBox="0 0 24 24" fill="none" stroke="#7c9aa5" stroke-width="1.500" stroke-linejoin="round"><path d="M8.500 2.500h7M10 2.500v7L4 21h16L14 9.500v-7M6.500 16h11"/></svg>
  <!-- B -->
  <svg style="top:346.5px;left:10.500px" width="27" height="27" viewBox="0 0 24 24"><text x="12" y="18.500" text-anchor="middle" font-family="DejaVu Sans,sans-serif" font-size="17" fill="#7c9aa5">B</text></svg>
  <!-- leetcode -->
  <svg style="top:394.5px;left:10.500px" width="27" height="27" viewBox="0 0 24 24" fill="none" stroke="#7c9aa5" stroke-width="1.600" stroke-linecap="round" stroke-linejoin="round"><path d="M12.500 1.500L4.200 10.800a2.600 2.600 0 0 0 0 3.600l5 5.500a2.800 2.800 0 0 0 4 0l3.800-3.800M10.400 14h10"/></svg>
  <!-- docker -->
  <svg style="top:442.5px;left:10.500px" width="27" height="27" viewBox="0 0 24 24" fill="#6d8e9a"><path d="M1 12h17.500c.5-1.500 0-3-.5-4 1-.8 2.500-.3 3 .8 1-.3 2 0 2.500.5-.7 1.600-2.300 2.200-3.500 2.200C18.500 16.500 15 20 9.500 20 4.500 20 1.500 17 1 12z"/><path d="M3.500 9h2.300v2.300H3.500zM6.300 9h2.300v2.300H6.300zM9.100 9h2.300v2.300H9.100zM11.900 9h2.300v2.300h-2.300zM6.300 6.300h2.300v2.300H6.300zM9.100 6.300h2.300v2.300H9.100zM11.900 6.300h2.300v2.300h-2.300zM9.100 3.600h2.300v2.300H9.100z"/></svg>
  <!-- account -->
  <svg style="top:874.5px;left:10.500px" width="27" height="27" viewBox="0 0 24 24" fill="none" stroke="#7c9aa5" stroke-width="1.500"><circle cx="12" cy="12" r="10.500"/><circle cx="12" cy="9.500" r="4"/><path d="M4.800 19.500c1-3.500 3.700-5 7.200-5s6.200 1.500 7.200 5"/></svg>
  <!-- gear -->
  <svg style="top:922.5px;left:10.500px" width="27" height="27" viewBox="0 0 24 24" fill="none" stroke="#7c9aa5" stroke-width="1.500" stroke-linejoin="round"><circle cx="12" cy="12" r="3.200"/><path d="M10.300 1.500h3.400l.5 3 1.900.8 2.500-1.800 2.400 2.400-1.800 2.500.8 1.900 3 .5v3.400l-3 .5-.8 1.900 1.800 2.500-2.400 2.400-2.500-1.800-1.900.8-.5 3h-3.400l-.5-3-1.900-.8-2.500 1.800-2.400-2.400 1.800-2.500-.8-1.900-3-.5v-3.400l3-.5.8-1.900-1.800-2.500 2.400-2.400 2.500 1.800 1.900-.8z"/></svg>
  <div class="bdg" style="top:936.5px">1</div>
</div>
<!-- status bar -->
<div class="abs sb">
  <div class="abs" style="left:0;top:0;width:34px;height:22px;background:#1f7a74"></div>
  <svg style="left:12px;top:5px" width="11" height="10.200" viewBox="0 0 14 13" fill="none" stroke="#e8f0f0" stroke-width="1.400"><path d="M1 3.500l4 4-4 4M13 1.500l-4 4 4 4"/></svg>
  <svg style="left:42px;top:3px" width="12" height="15" viewBox="0 0 12 15" fill="none" stroke="#93a1a1" stroke-width="1.100"><circle cx="3" cy="2.800" r="1.800"/><circle cx="3" cy="12.200" r="1.800"/><circle cx="9.500" cy="4.500" r="1.800"/><path d="M3 4.600v5.800M9.500 6.300c0 3-5 2-6 4.500"/></svg>
  <span style="left:59px">master*</span>
  <svg style="left:122px;top:5.500px" width="13" height="10.400" viewBox="0 0 15 12" fill="none" stroke="#93a1a1" stroke-width="1.100"><path d="M4 10H3.500a3 3 0 0 1-.3-6A4.200 4.200 0 0 1 11.500 4a3 3 0 0 1 0 6H11M7.500 11.500v-6M5.300 7.500l2.200-2.200 2.200 2.200"/></svg>
  <svg style="left:152px;top:4.5px" width="13" height="13" viewBox="0 0 13 13" fill="none" stroke="#93a1a1" stroke-width="1.100"><circle cx="6.500" cy="6.500" r="5.700"/><path d="M4.200 4.200l4.600 4.600M8.800 4.200L4.200 8.800"/></svg>
  <span style="left:168.500px">1</span>
  <svg style="left:179px;top:4.5px" width="14" height="13" viewBox="0 0 14 13" fill="none" stroke="#93a1a1" stroke-width="1.100" stroke-linejoin="round"><path d="M7 1l6 11H1zM7 5v3.500M7 9.800v1"/></svg>
  <span style="left:196px">0</span>
  <span style="left:219px">Blackbox</span>
  <span style="left:346px">Spaces: 2</span>
  <span style="left:414px">UTF-8</span>
  <span style="left:462px">LF</span>
  <span style="left:489px;font-size:11px">{}</span>
  <span style="left:509px">HTML</span>
  <svg style="left:558px;top:4px" width="14" height="13" viewBox="0 0 14 13" fill="none" stroke="#93a1a1" stroke-width="1.100"><circle cx="7" cy="5.500" r="1.500"/><path d="M7 7v5.500M4.200 8.300a4 4 0 1 1 5.600 0M2.600 10a6.200 6.200 0 1 1 8.800 0"/></svg>
  <span style="left:575px">Go Live</span>
  <span style="left:632px">Blackbox</span>
  <span style="left:698px">Prettier+</span>
  <svg style="left:763px;top:6px" width="14" height="9" viewBox="0 0 14 9" fill="none" stroke="#93a1a1" stroke-width="1.100"><path d="M.8 5.500L3 8 8.500.8M6 7l1 1L12.800.8"/></svg>
  <span style="left:781px">Prettier</span>
  <svg style="left:839px;top:4px" width="14" height="13" viewBox="0 0 14 13" fill="none" stroke="#93a1a1" stroke-width="1.100"><circle cx="5" cy="4" r="2.300"/><path d="M1 12c0-3 1.500-4.500 4-4.500S9 9 9 12M8 1h5.500v5H11l-1.500 1.500V6"/></svg>
  <svg style="left:868px;top:4px" width="14" height="13" viewBox="0 0 14 13" fill="none" stroke="#93a1a1" stroke-width="1.100"><path d="M5 12H1V1h7l3 3v3M8 1v3h3M6.500 8.500h7v4h-7zM8.500 8.500v-1.500h3v1.500"/></svg>
  <svg style="left:898px;top:4px" width="14" height="14" viewBox="0 0 14 14" fill="none" stroke="#93a1a1" stroke-width="1.100"><path d="M2.500 10V6.500A4.200 4.200 0 0 1 9 3M11.500 7.500V10l1 1.500h-11l1-1.500M5.800 13h2.400"/><circle cx="11" cy="3.500" r="2" fill="#93a1a1"/></svg>
</div>
<style>
#side{left:48px;top:61px;width:302px;height:960px;background:#00212b;overflow:hidden;color:#b4bdbe;font-size:12.300px}
#side .row{position:absolute;left:0;width:302px;height:22px;line-height:22px;white-space:nowrap}
#side .row .ic{position:absolute}
#side .row svg.ic{top:3.500px}
#side .row svg.fd{top:5px}
#side .row .ts{top:0;font-family:"Liberation Sans",sans-serif;font-weight:bold;font-size:10.500px;color:#1583da;letter-spacing:-.2px}
#side .row .nm{position:absolute;top:0}
#side .row .chv{position:absolute;top:6px}
#side .sec{position:absolute;left:0;width:302px;height:22px;background:#1a343d;font-family:"Liberation Sans",sans-serif;font-weight:bold;font-size:10.550px;line-height:22px;color:#d2d9da}
</style>
<div id="side" class="abs">
<div class="abs nw" style="left:20px;top:0;height:35px;line-height:35px;font-size:10.100px;color:#a0acad">EXPLORER</div>
<svg class="abs" style="left:272px;top:16px" width="13" height="3" viewBox="0 0 13 3" fill="#c9d1d2"><circle cx="1.500" cy="1.500" r="1.100"/><circle cx="6.500" cy="1.500" r="1.100"/><circle cx="11.500" cy="1.500" r="1.100"/></svg>
<div class="abs" style="left:0;top:52px;width:302px;height:900px;overflow:hidden">
<div class="row" style="top:-0.5px"><svg class="chv" width="10" height="11" viewBox="0 0 10 11" fill="none" stroke="#b4bdbe" stroke-width="1.200" style="left:18.5px;top:5.500px"><path d="M3 1l4.500 4.500L3 10"/></svg><svg class="ic fd" style="left:34.5px" width="14" height="12.250" viewBox="0 0 16 14"><path d="M.5 2.500a1 1 0 0 1 1-1h4l1.500 1.500h7.500a1 1 0 0 1 1 1V12a1 1 0 0 1-1 1h-13a1 1 0 0 1-1-1z" fill="#7cb342"/><path d="M.5 5.200h15V12a1 1 0 0 1-1 1h-13a1 1 0 0 1-1-1z" fill="#8bc34a"/><path d="M11 7l3 1.700v3.500L11 14l-3-1.800V8.700z" fill="#dcedc8" stroke="#558b2f" stroke-width=".6"/></svg><span class="nm" style="left:56px;color:#71858c">node_modules</span></div>
<div class="row" style="top:21.5px"><svg class="chv" width="11" height="10" viewBox="0 0 11 10" fill="none" stroke="#b4bdbe" stroke-width="1.200" style="left:17.5px"><path d="M1 2.500L5.500 7 10 2.500"/></svg><svg class="ic fd" style="left:34.5px" width="14" height="12.250" viewBox="0 0 16 14"><path d="M.5 2.500a1 1 0 0 1 1-1h4l1.500 1.500h7.500a1 1 0 0 1 1 1V12a1 1 0 0 1-1 1h-13a1 1 0 0 1-1-1z" fill="#2e7d32"/><path d="M.5 5.200h15V12a1 1 0 0 1-1 1h-13a1 1 0 0 1-1-1z" fill="#43a047"/><text x="10.500" y="12.500" text-anchor="middle" font-family="Liberation Mono,monospace" font-weight="bold" font-size="6.500" fill="#1b5e20">&lt;/&gt;</text></svg><span class="nm" style="left:56px">src</span></div>
<div class="row" style="top:43.5px"><svg class="chv" width="11" height="10" viewBox="0 0 11 10" fill="none" stroke="#b4bdbe" stroke-width="1.200" style="left:25.5px"><path d="M1 2.500L5.500 7 10 2.500"/></svg><svg class="ic fd" style="left:42.5px" width="14" height="12.250" viewBox="0 0 16 14"><path d="M.5 2.500a1 1 0 0 1 1-1h4l1.500 1.500h7.500a1 1 0 0 1 1 1V12a1 1 0 0 1-1 1h-13a1 1 0 0 1-1-1z" fill="#2e7d32"/><path d="M.5 5.200h15V12a1 1 0 0 1-1 1h-13a1 1 0 0 1-1-1z" fill="#43a047"/><rect x="7.500" y="7" width="7.500" height="6.500" fill="#1b3b1d" stroke="#a5d6a7" stroke-width=".8"/><circle cx="11.200" cy="10.200" r="1.400" fill="#a5d6a7"/></svg><span class="nm" style="left:64px">app</span></div>
<div class="row" style="top:65.5px"><svg class="chv" width="11" height="10" viewBox="0 0 11 10" fill="none" stroke="#b4bdbe" stroke-width="1.200" style="left:33.5px"><path d="M1 2.500L5.500 7 10 2.500"/></svg><svg class="ic fd" style="left:50.5px" width="14" height="12.250" viewBox="0 0 16 14"><path d="M.5 2.500a1 1 0 0 1 1-1h4l1.500 1.500h7.500a1 1 0 0 1 1 1V12a1 1 0 0 1-1 1h-13a1 1 0 0 1-1-1z" fill="#e57373"/><path d="M.5 5.200h15V12a1 1 0 0 1-1 1h-13a1 1 0 0 1-1-1z" fill="#f4511e"/><circle cx="11" cy="10" r="2.600" fill="#fff3e0"/><circle cx="11" cy="10" r="1.100" fill="#e64a19"/></svg><span class="nm" style="left:72px">pages</span></div>
<div class="row" style="top:87.5px"><svg class="chv" width="11" height="10" viewBox="0 0 11 10" fill="none" stroke="#b4bdbe" stroke-width="1.200" style="left:41.5px"><path d="M1 2.500L5.500 7 10 2.500"/></svg><svg class="ic fd" style="left:58.5px" width="14" height="12.250" viewBox="0 0 16 14"><path d="M.5 2.500a1 1 0 0 1 1-1h4l1.500 1.500h7.500a1 1 0 0 1 1 1V12a1 1 0 0 1-1 1h-13a1 1 0 0 1-1-1z" fill="#c09553"/><path d="M2.800 5.300h13L14 13H.5z" fill="#dcb67a"/></svg><span class="nm" style="left:80px">mentor-details</span></div>
<div class="row" style="top:109.5px"><span class="ic ts" style="left:67px">TS</span><span class="nm" style="left:88px">mentor-details-routing.module.ts</span></div>
<div class="row" style="top:131.5px"><span class="ic ts" style="left:67px">TS</span><span class="nm" style="left:88px">mentor-details.module.ts</span></div>
<div class="row" style="top:153.5px"><svg class="ic" style="left:66.5px" width="14" height="15" viewBox="0 0 14 15"><path d="M.8.500h12.400l-1.100 12.300L7 14.500l-5.100-1.700z" fill="#e44d26"/><path d="M7 1.600v11.800l4.100-1.300.9-10.500z" fill="#f16529"/><path d="M9.800 4H4.200l.2 3h5l-.3 3.200L7 10.900l-2.100-.7-.1-1.300" fill="none" stroke="#fff" stroke-width="1.500"/></svg><span class="nm" style="left:88px">mentor-details.page.html</span></div>
<div class="row" style="top:175.5px"><svg class="ic" style="left:66.5px" width="16.500" height="16.500" viewBox="0 0 15 15" fill="none" stroke="#cf649a" stroke-width="1.100" stroke-linecap="round"><path d="M13 3.500C12.500 1 8.500 1 6 2.800 3.500 4.600 4.500 6.300 6.500 7.200c2 .9 2.500 2 1 3.600-1.200 1.200-3.500 2.700-4.500 1.700-.9-1 .6-3 3-4 2.300-.9 5-1 6.500 0"/></svg><span class="nm" style="left:88px">mentor-details.page.scss</span></div>
<div class="row" style="top:197.5px"><svg class="ic" style="left:66.5px;top:4px" width="15" height="14.100" viewBox="0 0 17 16"><g transform="rotate(42 8 8)"><rect x="5.200" y="1.200" width="5.600" height="14" rx="2.800" fill="#1e88e5"/><rect x="4" y=".2" width="8" height="2.200" rx=".6" fill="#2a93ee"/><rect x="6.200" y="7" width="3.600" height="7" rx="1.800" fill="#0d62b8"/></g><path d="M12 6.500c1.600 2 2.300 3 2.300 4a2.300 2.300 0 0 1-4.600 0c0-1 .7-2 2.300-4z" fill="#1e88e5"/><text x="13.200" y="15.600" text-anchor="middle" font-family="Liberation Sans,sans-serif" font-weight="bold" font-size="6.500" fill="#1e88e5">TS</text></svg><span class="nm" style="left:88px">mentor-details.page.spec.ts</span></div>
<div class="row" style="top:219.5px"><span class="ic ts" style="left:67px">TS</span><span class="nm" style="left:88px">mentor-details.page.ts</span></div>
<div class="row" style="top:241.5px"><svg class="chv" width="11" height="10" viewBox="0 0 11 10" fill="none" stroke="#b4bdbe" stroke-width="1.200" style="left:41.5px"><path d="M1 2.500L5.500 7 10 2.500"/></svg><svg class="ic fd" style="left:58.5px" width="14" height="12.250" viewBox="0 0 16 14"><path d="M.5 2.500a1 1 0 0 1 1-1h4l1.500 1.500h7.500a1 1 0 0 1 1 1V12a1 1 0 0 1-1 1h-13a1 1 0 0 1-1-1z" fill="#c09553"/><path d="M2.800 5.300h13L14 13H.5z" fill="#dcb67a"/></svg><span class="nm" style="left:80px">mentors</span></div>
<div class="row" style="top:263.5px"><span class="ic ts" style="left:67px">TS</span><span class="nm" style="left:88px">mentor-search.service.ts</span></div>
<div class="row" style="top:285.5px"><span class="ic ts" style="left:67px">TS</span><span class="nm" style="left:88px">mentors-routing.module.ts</span></div>
<div class="row" style="top:307.5px"><span class="ic ts" style="left:67px">TS</span><span class="nm" style="left:88px">mentors.module.ts</span></div>
<div class="row" style="top:329.5px;background:#003847"><svg class="ic" style="left:66.5px" width="14" height="15" viewBox="0 0 14 15"><path d="M.8.500h12.400l-1.100 12.300L7 14.500l-5.100-1.700z" fill="#e44d26"/><path d="M7 1.600v11.800l4.100-1.300.9-10.500z" fill="#f16529"/><path d="M9.800 4H4.200l.2 3h5l-.3 3.200L7 10.900l-2.100-.7-.1-1.300" fill="none" stroke="#fff" stroke-width="1.500"/></svg><span class="nm" style="left:88px">mentors.page.html</span></div>
<div class="row" style="top:351.5px"><svg class="ic" style="left:66.5px" width="16.500" height="16.500" viewBox="0 0 15 15" fill="none" stroke="#cf649a" stroke-width="1.100" stroke-linecap="round"><path d="M13 3.500C12.500 1 8.500 1 6 2.800 3.500 4.600 4.500 6.300 6.500 7.200c2 .9 2.500 2 1 3.600-1.200 1.200-3.500 2.700-4.500 1.700-.9-1 .6-3 3-4 2.300-.9 5-1 6.500 0"/></svg><span class="nm" style="left:88px">mentors.page.scss</span></div>
<div class="row" style="top:373.5px"><svg class="ic" style="left:66.5px;top:4px" width="15" height="14.100" viewBox="0 0 17 16"><g transform="rotate(42 8 8)"><rect x="5.200" y="1.200" width="5.600" height="14" rx="2.800" fill="#1e88e5"/><rect x="4" y=".2" width="8" height="2.200" rx=".6" fill="#2a93ee"/><rect x="6.200" y="7" width="3.600" height="7" rx="1.800" fill="#0d62b8"/></g><path d="M12 6.500c1.600 2 2.300 3 2.300 4a2.300 2.300 0 0 1-4.600 0c0-1 .7-2 2.300-4z" fill="#1e88e5"/><text x="13.200" y="15.600" text-anchor="middle" font-family="Liberation Sans,sans-serif" font-weight="bold" font-size="6.500" fill="#1e88e5">TS</text></svg><span class="nm" style="left:88px">mentors.page.spec.ts</span></div>
<div class="row" style="top:395.5px"><span class="ic ts" style="left:67px">TS</span><span class="nm" style="left:88px">mentors.page.ts</span></div>
<div class="row" style="top:417.5px"><svg class="chv" width="11" height="10" viewBox="0 0 11 10" fill="none" stroke="#b4bdbe" stroke-width="1.200" style="left:33.5px"><path d="M1 2.500L5.500 7 10 2.500"/></svg><svg class="ic fd" style="left:50.5px" width="14" height="12.250" viewBox="0 0 16 14"><path d="M.5 2.500a1 1 0 0 1 1-1h4l1.500 1.500h7.500a1 1 0 0 1 1 1V12a1 1 0 0 1-1 1h-13a1 1 0 0 1-1-1z" fill="#90a4ae"/><path d="M.5 5.200h15V12a1 1 0 0 1-1 1h-13a1 1 0 0 1-1-1z" fill="#b0bec5"/><circle cx="11.500" cy="10.500" r="2.700" fill="#546e7a" stroke="#cfd8dc" stroke-width=".8"/><circle cx="11.500" cy="10.500" r="1" fill="#cfd8dc"/><path d="M2 7.500h5M2 9.500h4" stroke="#546e7a" stroke-width=".9"/></svg><span class="nm" style="left:72px">services</span></div>
<div class="row" style="top:439.5px"><svg class="ic" style="left:58.5px;top:4px" width="15" height="14.100" viewBox="0 0 17 16"><g transform="rotate(42 8 8)"><rect x="5.200" y="1.200" width="5.600" height="14" rx="2.800" fill="#1e88e5"/><rect x="4" y=".2" width="8" height="2.200" rx=".6" fill="#2a93ee"/><rect x="6.200" y="7" width="3.600" height="7" rx="1.800" fill="#0d62b8"/></g><path d="M12 6.500c1.600 2 2.300 3 2.300 4a2.300 2.300 0 0 1-4.600 0c0-1 .7-2 2.300-4z" fill="#1e88e5"/><text x="13.200" y="15.600" text-anchor="middle" font-family="Liberation Sans,sans-serif" font-weight="bold" font-size="6.500" fill="#1e88e5">TS</text></svg><span class="nm" style="left:80px">mentor.service.spec.ts</span></div>
<div class="row" style="top:461.5px"><span class="ic ts" style="left:59px">TS</span><span class="nm" style="left:80px">mentor.service.ts</span></div>
<div class="row" style="top:483.5px"><span class="ic ts" style="left:51px">TS</span><span class="nm" style="left:72px">app-routing.module.ts</span></div>
<div class="row" style="top:505.5px"><svg class="ic" style="left:50.5px" width="14" height="15" viewBox="0 0 14 15"><path d="M.8.500h12.400l-1.100 12.300L7 14.500l-5.100-1.700z" fill="#e44d26"/><path d="M7 1.600v11.800l4.100-1.300.9-10.500z" fill="#f16529"/><path d="M9.800 4H4.200l.2 3h5l-.3 3.200L7 10.900l-2.100-.7-.1-1.300" fill="none" stroke="#fff" stroke-width="1.500"/></svg><span class="nm" style="left:72px">app.component.html</span></div>
<div class="row" style="top:527.5px"><svg class="ic" style="left:50.5px" width="16.500" height="16.500" viewBox="0 0 15 15" fill="none" stroke="#cf649a" stroke-width="1.100" stroke-linecap="round"><path d="M13 3.500C12.500 1 8.500 1 6 2.800 3.500 4.600 4.500 6.300 6.500 7.200c2 .9 2.500 2 1 3.600-1.200 1.200-3.500 2.700-4.500 1.700-.9-1 .6-3 3-4 2.300-.9 5-1 6.500 0"/></svg><span class="nm" style="left:72px">app.component.scss</span></div>
<div class="row" style="top:549.5px"><svg class="ic" style="left:50.5px;top:4px" width="15" height="14.100" viewBox="0 0 17 16"><g transform="rotate(42 8 8)"><rect x="5.200" y="1.200" width="5.600" height="14" rx="2.800" fill="#1e88e5"/><rect x="4" y=".2" width="8" height="2.200" rx=".6" fill="#2a93ee"/><rect x="6.200" y="7" width="3.600" height="7" rx="1.800" fill="#0d62b8"/></g><path d="M12 6.500c1.600 2 2.300 3 2.300 4a2.300 2.300 0 0 1-4.600 0c0-1 .7-2 2.300-4z" fill="#1e88e5"/><text x="13.200" y="15.600" text-anchor="middle" font-family="Liberation Sans,sans-serif" font-weight="bold" font-size="6.500" fill="#1e88e5">TS</text></svg><span class="nm" style="left:72px">app.component.spec.ts</span></div>
<div class="row" style="top:571.5px"><span class="ic ts" style="left:51px">TS</span><span class="nm" style="left:72px">app.component.ts</span></div>
<div class="row" style="top:593.5px"><span class="ic ts" style="left:51px">TS</span><span class="nm" style="left:72px">app.module.ts</span></div>
<div class="row" style="top:615.5px"><svg class="chv" width="11" height="10" viewBox="0 0 11 10" fill="none" stroke="#b4bdbe" stroke-width="1.200" style="left:25.5px"><path d="M1 2.500L5.500 7 10 2.500"/></svg><svg class="ic fd" style="left:42.5px" width="14" height="12.250" viewBox="0 0 16 14"><path d="M.5 2.500a1 1 0 0 1 1-1h4l1.500 1.500h7.500a1 1 0 0 1 1 1V12a1 1 0 0 1-1 1h-13a1 1 0 0 1-1-1z" fill="#e57373"/><path d="M.5 5.200h15V12a1 1 0 0 1-1 1h-13a1 1 0 0 1-1-1z" fill="#ef5350"/><rect x="7" y="6.500" width="8" height="7" rx="1" fill="#cfd8dc" stroke="#b71c1c" stroke-width=".6"/><rect x="9" y="8.300" width="4" height="3.500" fill="#78909c"/></svg><span class="nm" style="left:64px">assets</span></div>
<div class="row" style="top:637.5px"><svg class="chv" width="10" height="11" viewBox="0 0 10 11" fill="none" stroke="#b4bdbe" stroke-width="1.200" style="left:34.5px;top:5.500px"><path d="M3 1l4.500 4.500L3 10"/></svg><svg class="ic fd" style="left:50.5px" width="14" height="12.250" viewBox="0 0 16 14"><path d="M.5 2.500a1 1 0 0 1 1-1h4l1.500 1.500h7.500a1 1 0 0 1 1 1V12a1 1 0 0 1-1 1h-13a1 1 0 0 1-1-1z" fill="#26a69a"/><path d="M.5 5.200h15V12a1 1 0 0 1-1 1h-13a1 1 0 0 1-1-1z" fill="#4db6ac"/><path d="M6 12.500l3-4 2 2.500 1.500-1.500 2.500 3z" fill="#e0f2f1"/><circle cx="12.500" cy="7.500" r="1" fill="#e0f2f1"/></svg><span class="nm" style="left:72px">icon</span></div>
<div class="row" style="top:659.5px"><svg class="ic" style="left:50.5px" width="15" height="16" viewBox="0 0 15 16"><g stroke="#ffb300" stroke-width="1.400"><path d="M7.500 0v4M2 1.500l2.500 3M13 1.500l-2.500 3M0 5.500h4M15 5.500h-4"/></g><circle cx="7.500" cy="5.500" r="3" fill="#ffb300"/><rect x="0" y="8" width="15" height="7.500" rx="1" fill="#141414"/><text x="7.500" y="14.300" text-anchor="middle" font-family="Liberation Sans,sans-serif" font-weight="bold" font-size="6.800" fill="#fff">SVG</text></svg><span class="nm" style="left:72px">shapes.svg</span></div>
<div class="row" style="top:681.5px"><svg class="chv" width="10" height="11" viewBox="0 0 10 11" fill="none" stroke="#b4bdbe" stroke-width="1.200" style="left:26.5px;top:5.500px"><path d="M3 1l4.500 4.500L3 10"/></svg><svg class="ic fd" style="left:42.5px" width="14" height="12.250" viewBox="0 0 16 14"><path d="M.5 2.500a1 1 0 0 1 1-1h4l1.500 1.500h7.500a1 1 0 0 1 1 1V12a1 1 0 0 1-1 1h-13a1 1 0 0 1-1-1z" fill="#c09553"/><path d="M.5 5.200h15V12a1 1 0 0 1-1 1h-13a1 1 0 0 1-1-1z" fill="#c9a25e"/></svg><span class="nm" style="left:64px">environments</span></div>
<div class="row" style="top:703.5px"><svg class="chv" width="10" height="11" viewBox="0 0 10 11" fill="none" stroke="#b4bdbe" stroke-width="1.200" style="left:26.5px;top:5.500px"><path d="M3 1l4.500 4.500L3 10"/></svg><svg class="ic fd" style="left:42.5px" width="14" height="12.250" viewBox="0 0 16 14"><path d="M.5 2.500a1 1 0 0 1 1-1h4l1.500 1.500h7.500a1 1 0 0 1 1 1V12a1 1 0 0 1-1 1h-13a1 1 0 0 1-1-1z" fill="#c09553"/><path d="M.5 5.200h15V12a1 1 0 0 1-1 1h-13a1 1 0 0 1-1-1z" fill="#c9924f"/><circle cx="9" cy="9.500" r="1.300" fill="#e53935"/><circle cx="12" cy="8.500" r="1.300" fill="#1e88e5"/><circle cx="12.500" cy="11.500" r="1.300" fill="#7cb342"/><circle cx="9.500" cy="12" r="1" fill="#8e24aa"/></svg><span class="nm" style="left:64px">theme</span></div>
<div class="row" style="top:725.5px"><svg class="ic" style="left:42.5px" width="16.500" height="16.500" viewBox="0 0 15 15" fill="none" stroke="#cf649a" stroke-width="1.100" stroke-linecap="round"><path d="M13 3.500C12.500 1 8.500 1 6 2.800 3.500 4.600 4.500 6.300 6.500 7.200c2 .9 2.500 2 1 3.600-1.200 1.200-3.500 2.700-4.500 1.700-.9-1 .6-3 3-4 2.300-.9 5-1 6.500 0"/></svg><span class="nm" style="left:64px">global.scss</span></div>
<div class="row" style="top:747.5px"><svg class="ic" style="left:42.5px" width="14" height="15" viewBox="0 0 14 15"><path d="M.8.500h12.400l-1.100 12.300L7 14.500l-5.100-1.700z" fill="#e44d26"/><path d="M7 1.600v11.800l4.100-1.300.9-10.500z" fill="#f16529"/><path d="M9.800 4H4.200l.2 3h5l-.3 3.200L7 10.900l-2.100-.7-.1-1.300" fill="none" stroke="#fff" stroke-width="1.500"/></svg><span class="nm" style="left:64px">index.html</span></div>
<div class="row" style="top:769.5px"><span class="ic ts" style="left:43px">TS</span><span class="nm" style="left:64px">main.ts</span></div>
<div class="row" style="top:791.5px"><span class="ic ts" style="left:43px">TS</span><span class="nm" style="left:64px">polyfills.ts</span></div>
<div class="row" style="top:813.5px"><span class="ic ts" style="left:43px">TS</span><span class="nm" style="left:64px">test.ts</span></div>
<div class="row" style="top:835.5px"><span class="ic ts" style="left:43px">TS</span><span class="nm" style="left:64px">zone-flags.ts</span></div>
<div class="row" style="top:857.5px"><svg class="ic" style="left:34.5px" width="15" height="15" viewBox="0 0 15 15"><circle cx="7.500" cy="7.500" r="7" fill="#f0c41b"/><text x="7.500" y="11" text-anchor="middle" font-family="Liberation Sans,sans-serif" font-weight="bold" font-size="9" fill="#333">K</text></svg><span class="nm" style="left:56px">karma.conf.js</span></div>
<div class="abs" style="left:44px;top:263px;width:1px;height:154px;background:#5b6f76"></div>
</div>
<div class="sec" style="top:35px"><svg class="abs" style="left:5px;top:6px" width="11" height="10" viewBox="0 0 11 10" fill="none" stroke="#c9d1d2" stroke-width="1.200"><path d="M1 2.500L5.500 7 10 2.500"/></svg><span class="abs" style="left:20px">TUTORSAPP</span></div>
<div class="abs" style="left:0;top:57px;width:302px;height:4px;background:linear-gradient(rgba(0,0,0,.45),rgba(0,0,0,0))"></div>
<div class="sec" style="top:916px;letter-spacing:.3px"><svg class="abs" style="left:6px;top:5px" width="10" height="11" viewBox="0 0 10 11" fill="none" stroke="#c9d1d2" stroke-width="1.200"><path d="M3 1l4.500 4.500L3 10"/></svg><span class="abs" style="left:20px">OUTLINE</span></div>
<div class="sec" style="top:938px;letter-spacing:.3px;border-top:1px solid #17303a"><svg class="abs" style="left:6px;top:5px" width="10" height="11" viewBox="0 0 10 11" fill="none" stroke="#c9d1d2" stroke-width="1.200"><path d="M3 1l4.500 4.500L3 10"/></svg><span class="abs" style="left:20px">TIMELINE</span></div>
</div>
<style>
#ed{left:350px;top:61px;width:578px;height:613px;background:#002b36;overflow:hidden}
#ed .tabs{left:0;top:0;width:578px;height:35px;background:#004052;font-size:12.300px;line-height:36px;color:#93a1a1}
#ed .tabs span{position:absolute;top:0;white-space:nowrap}
#ed .bc{left:0;top:35px;width:578px;height:22px;font-size:12.300px;line-height:23px;color:#a3aeaf}
#ed .bc span{position:absolute;top:0;white-space:nowrap}
#ed .bc svg{position:absolute}
#code{left:0;top:90px;width:505px;height:522px;overflow:hidden;font-family:"DejaVu Sans Mono","Liberation Mono",monospace;font-size:14px;color:#93a1a1}
#code .ln{position:absolute;left:0;width:44px;text-align:right;height:19px;line-height:19px;color:#8a989b;margin-top:1px}
#code .cl{position:absolute;left:70px;height:19px;line-height:19px;white-space:pre}
#code b{font-weight:normal}
#code .p{color:#5f757c}#code .t{color:#268bd2}#code .a{color:#93a1a1}#code .s{color:#2aa198}#code .c{color:#586e75;font-style:italic}
#code .g{position:absolute;width:1px;height:19px;background:#4c6168}
.tsi{font-family:"Liberation Sans",sans-serif;font-weight:bold;font-size:10.500px;color:#1583da;letter-spacing:-.2px}
</style>
<div id="ed" class="abs">
<div class="abs tabs">
  <div class="abs" style="left:0;top:0;width:162px;height:35px;border-right:1px solid #003847"></div>
  <span class="tsi" style="left:11px">TS</span><span style="left:32px">mentors.page.ts</span>
  <div class="abs" style="left:162px;top:0;width:178px;height:35px;background:#002b36"></div>
  <svg class="abs" style="left:172.500px;top:10px" width="14" height="15" viewBox="0 0 14 15"><path d="M.8.500h12.400l-1.100 12.300L7 14.500l-5.100-1.700z" fill="#e44d26"/><path d="M7 1.600v11.800l4.100-1.300.9-10.500z" fill="#f16529"/><path d="M9.800 4H4.200l.2 3h5l-.3 3.200L7 10.900l-2.100-.7-.1-1.300" fill="none" stroke="#fff" stroke-width="1.500"/></svg>
  <span style="left:193px;color:#d6dbdb">mentors.page.html</span>
  <svg class="abs" style="left:320px;top:13px" width="10" height="10" viewBox="0 0 10 10" stroke="#d6dbdb" stroke-width="1.200"><path d="M1 1l8 8M9 1L1 9"/></svg>
  <svg class="abs" style="left:351px;top:10px" width="15" height="15" viewBox="0 0 15 15" fill="none" stroke="#cf649a" stroke-width="1.200" stroke-linecap="round"><path d="M13 3.500C12.500 1 8.500 1 6 2.800 3.500 4.600 4.500 6.300 6.500 7.200c2 .9 2.500 2 1 3.600-1.200 1.200-3.500 2.700-4.500 1.700-.9-1 .6-3 3-4 2.300-.9 5-1 6.500 0"/></svg>
  <div class="abs" style="left:372px;top:0;width:90px;height:35px;overflow:hidden;-webkit-mask-image:linear-gradient(90deg,#000 88%,transparent 100%);mask-image:linear-gradient(90deg,#000 88%,transparent 100%)"><span style="left:0">mentors.page.scss</span></div>
  <svg class="abs" style="left:470px;top:10px" width="13" height="15" viewBox="0 0 13 15" fill="none" stroke="#d6dbdb" stroke-width="1.200" stroke-linejoin="round"><path d="M1.500 1.500l10 6-10 6z"/></svg>
  <svg class="abs" style="left:495px;top:10px" width="16" height="15" viewBox="0 0 16 15" fill="none" stroke="#d6dbdb" stroke-width="1.200"><path d="M2.500 3.500A6.300 6.300 0 1 1 1.800 8M2.500 0v3.800h3.800M8 4v4l2.500 1.500"/></svg>
  <svg class="abs" style="left:522px;top:10px" width="15" height="15" viewBox="0 0 15 15" fill="none" stroke="#d6dbdb" stroke-width="1.200"><rect x="1" y="1.500" width="13" height="12" rx="1"/><path d="M7.500 1.500v12"/></svg>
  <svg class="abs" style="left:548px;top:16px" width="14" height="3" viewBox="0 0 14 3" fill="#d6dbdb"><circle cx="1.500" cy="1.500" r="1.200"/><circle cx="7" cy="1.500" r="1.200"/><circle cx="12.500" cy="1.500" r="1.200"/></svg>
</div>
<div class="abs bc">
  <span style="left:16px">src</span><svg style="left:37px;top:5.500px" width="8" height="12" viewBox="0 0 8 12" fill="none" stroke="#93a1a1" stroke-width="1.100"><path d="M1.500 1L6.500 6l-5 5"/></svg>
  <span style="left:49px">app</span><svg style="left:76px;top:5.500px" width="8" height="12" viewBox="0 0 8 12" fill="none" stroke="#93a1a1" stroke-width="1.100"><path d="M1.500 1L6.500 6l-5 5"/></svg>
  <span style="left:89px">pages</span><svg style="left:129px;top:5.500px" width="8" height="12" viewBox="0 0 8 12" fill="none" stroke="#93a1a1" stroke-width="1.100"><path d="M1.500 1L6.500 6l-5 5"/></svg>
  <span style="left:142px">mentors</span><svg style="left:197px;top:5.500px" width="8" height="12" viewBox="0 0 8 12" fill="none" stroke="#93a1a1" stroke-width="1.100"><path d="M1.500 1L6.500 6l-5 5"/></svg>
  <svg style="left:211px;top:4px" width="13" height="14" viewBox="0 0 14 15"><path d="M.8.500h12.400l-1.100 12.300L7 14.500l-5.100-1.700z" fill="#e44d26"/><path d="M7 1.600v11.800l4.100-1.300.9-10.500z" fill="#f16529"/><path d="M9.800 4H4.200l.2 3h5l-.3 3.200L7 10.900l-2.100-.7-.1-1.300" fill="none" stroke="#fff" stroke-width="1.500"/></svg>
  <span style="left:231px">mentors.page.html</span><svg style="left:352px;top:5.500px" width="8" height="12" viewBox="0 0 8 12" fill="none" stroke="#93a1a1" stroke-width="1.100"><path d="M1.500 1L6.500 6l-5 5"/></svg>
  <svg style="left:366px;top:5px" width="15" height="12" viewBox="0 0 15 12" fill="none" stroke="#4aa3e8" stroke-width="1.100" stroke-linejoin="round"><path d="M1 4l5-3 8 2.500v5L8.500 11 1 8.500zM1 4l7.500 2.500L14 3.500M8.500 6.500V11"/></svg>
  <span style="left:384px">ion-content</span>
</div>
<div id="code" class="abs">
<div class="ln" style="top:0px">1</div>
<div class="cl" style="top:0px"><b class="p">&lt;</b><b class="t">ion-header</b><b class="a"> [translucent]=</b><b class="s">"true"</b><b class="p">&gt;</b></div>
<div class="ln" style="top:19px">2</div>
<i class="g" style="left:70px;top:19px"></i>
<div class="cl" style="top:19px">  <b class="p">&lt;</b><b class="t">ion-toolbar</b><b class="p">&gt;</b></div>
<div class="ln" style="top:38px">3</div>
<i class="g" style="left:70px;top:38px"></i>
<i class="g" style="left:87px;top:38px"></i>
<div class="cl" style="top:38px">    <b class="p">&lt;</b><b class="t">ion-title</b><b class="p">&gt;</b>mentors<b class="p">&lt;/</b><b class="t">ion-title</b><b class="p">&gt;</b></div>
<div class="ln" style="top:57px">4</div>
<i class="g" style="left:70px;top:57px"></i>
<div class="cl" style="top:57px">  <b class="p">&lt;/</b><b class="t">ion-toolbar</b><b class="p">&gt;</b></div>
<div class="ln" style="top:76px">5</div>
<div class="cl" style="top:76px"><b class="p">&lt;/</b><b class="t">ion-header</b><b class="p">&gt;</b></div>
<div class="ln" style="top:95px">6</div>
<div class="ln" style="top:114px">7</div>
<div class="cl" style="top:114px"><b class="p">&lt;</b><b class="t">ion-content</b><b class="p">&gt;</b></div>
<div class="ln" style="top:133px">8</div>
<i class="g" style="left:70px;top:133px"></i>
<div class="cl" style="top:133px">  <b class="p">&lt;</b><b class="t">div</b><b class="a"> class=</b><b class="s">"top-section"</b><b class="p">&gt;</b></div>
<div class="ln" style="top:152px">9</div>
<i class="g" style="left:70px;top:152px"></i>
<i class="g" style="left:87px;top:152px"></i>
<div class="cl" style="top:152px">    <b class="p">&lt;</b><b class="t">ion-item</b><b class="p">&gt;</b></div>
<div class="ln" style="top:171px">10</div>
<i class="g" style="left:70px;top:171px"></i>
<i class="g" style="left:87px;top:171px"></i>
<i class="g" style="left:104px;top:171px"></i>
<div class="cl" style="top:171px">      <b class="p">&lt;</b><b class="t">ion-select</b><b class="a"> (ionChange)=</b><b class="s">"onSessionTitleChange($event)"</b><b class="a"> placeholder=</b><b class="s">"Select a Session Title"</b><b class="p">&gt;</b></div>
<div class="ln" style="top:190px">11</div>
<i class="g" style="left:70px;top:190px"></i>
<i class="g" style="left:87px;top:190px"></i>
<i class="g" style="left:104px;top:190px"></i>
<i class="g" style="left:121px;top:190px"></i>
<div class="cl" style="top:190px">        <b class="p">&lt;</b><b class="t">ion-select-option</b><b class="a"> *ngFor=</b><b class="s">"let title of sessionTitles"</b><b class="a"> [value]=</b><b class="s">"title"</b><b class="p">&gt;</b></div>
<div class="ln" style="top:209px">12</div>
<i class="g" style="left:70px;top:209px"></i>
<i class="g" style="left:87px;top:209px"></i>
<i class="g" style="left:104px;top:209px"></i>
<i class="g" style="left:121px;top:209px"></i>
<i class="g" style="left:137px;top:209px"></i>
<div class="cl" style="top:209px">          {{ title.title }}</div>
<div class="ln" style="top:228px">13</div>
<i class="g" style="left:70px;top:228px"></i>
<i class="g" style="left:87px;top:228px"></i>
<i class="g" style="left:104px;top:228px"></i>
<i class="g" style="left:121px;top:228px"></i>
<div class="cl" style="top:228px">        <b class="p">&lt;/</b><b class="t">ion-select-option</b><b class="p">&gt;</b></div>
<div class="ln" style="top:247px">14</div>
<i class="g" style="left:70px;top:247px"></i>
<i class="g" style="left:87px;top:247px"></i>
<i class="g" style="left:104px;top:247px"></i>
<div class="cl" style="top:247px">      <b class="p">&lt;/</b><b class="t">ion-select</b><b class="p">&gt;</b></div>
<div class="ln" style="top:266px">15</div>
<i class="g" style="left:70px;top:266px"></i>
<i class="g" style="left:87px;top:266px"></i>
<div class="cl" style="top:266px">    <b class="p">&lt;/</b><b class="t">ion-item</b><b class="p">&gt;</b></div>
<div class="ln" style="top:285px">16</div>
<i class="g" style="left:70px;top:285px"></i>
<div class="cl" style="top:285px">  <b class="p">&lt;/</b><b class="t">div</b><b class="p">&gt;</b></div>
<div class="abs" style="left:70px;top:304px;width:440px;height:19px;background:#073642"></div>
<div class="ln" style="top:304px">17</div>
<i class="g" style="left:70px;top:304px"></i>
<div class="ln" style="top:323px">18</div>
<i class="g" style="left:70px;top:323px"></i>
<div class="cl" style="top:323px">  <b class="p">&lt;</b><b class="t">ion-list</b><b class="p">&gt;</b></div>
<div class="ln" style="top:342px">19</div>
<i class="g" style="left:70px;top:342px"></i>
<i class="g" style="left:87px;top:342px"></i>
<div class="cl" style="top:342px">    <i class="c">&lt;!-- Use *ngFor to iterate through mentors and generate list items --&gt;</i></div>
<div class="ln" style="top:361px">20</div>
<i class="g" style="left:70px;top:361px"></i>
<i class="g" style="left:87px;top:361px"></i>
<div class="cl" style="top:361px">    <b class="p">&lt;</b><b class="t">ion-item</b><b class="a"> button *ngFor=</b><b class="s">"let item of mentors"</b><b class="a"> [routerLink]=</b><b class="s">"[item.mentor.id]"</b><b class="p">&gt;</b></div>
<div class="ln" style="top:380px">21</div>
<i class="g" style="left:70px;top:380px"></i>
<i class="g" style="left:87px;top:380px"></i>
<i class="g" style="left:104px;top:380px"></i>
<div class="cl" style="top:380px">      <b class="p">&lt;</b><b class="t">ion-avatar</b><b class="a"> slot=</b><b class="s">"start"</b><b class="p">&gt;</b></div>
<div class="ln" style="top:399px">22</div>
<i class="g" style="left:70px;top:399px"></i>
<i class="g" style="left:87px;top:399px"></i>
<i class="g" style="left:104px;top:399px"></i>
<i class="g" style="left:121px;top:399px"></i>
<div class="cl" style="top:399px">        <i class="c">&lt;!-- Use a random image URL from the web as the avatar --&gt;</i></div>
<div class="ln" style="top:418px">23</div>
<i class="g" style="left:70px;top:418px"></i>
<i class="g" style="left:87px;top:418px"></i>
<i class="g" style="left:104px;top:418px"></i>
<i class="g" style="left:121px;top:418px"></i>
<div class="cl" style="top:418px">        <b class="p">&lt;</b><b class="t">img</b><b class="a"> [src]=</b><b class="s">"getRandomImageURL()"</b><b class="a"> alt=</b><b class="s">"Mentor Avatar"</b><b class="a"> </b><b class="p">/&gt;</b></div>
<div class="ln" style="top:437px">24</div>
<i class="g" style="left:70px;top:437px"></i>
<i class="g" style="left:87px;top:437px"></i>
<i class="g" style="left:104px;top:437px"></i>
<div class="cl" style="top:437px">      <b class="p">&lt;/</b><b class="t">ion-avatar</b><b class="p">&gt;</b></div>
<div class="ln" style="top:456px">25</div>
<i class="g" style="left:70px;top:456px"></i>
<i class="g" style="left:87px;top:456px"></i>
<i class="g" style="left:104px;top:456px"></i>
<div class="cl" style="top:456px">      <b class="p">&lt;</b><b class="t">div</b><b class="p">&gt;</b></div>
<div class="ln" style="top:475px">26</div>
<i class="g" style="left:70px;top:475px"></i>
<i class="g" style="left:87px;top:475px"></i>
<i class="g" style="left:104px;top:475px"></i>
<i class="g" style="left:121px;top:475px"></i>
<div class="cl" style="top:475px">        <b class="p">&lt;</b><b class="t">h2</b><b class="p">&gt;</b>{{ item.mentor.name }}<b class="p">&lt;/</b><b class="t">h2</b><b class="p">&gt;</b></div>
<div class="ln" style="top:494px">27</div>
<i class="g" style="left:70px;top:494px"></i>
<i class="g" style="left:87px;top:494px"></i>
<i class="g" style="left:104px;top:494px"></i>
<i class="g" style="left:121px;top:494px"></i>
<div class="cl" style="top:494px">        <b class="p">&lt;</b><b class="t">p</b><b class="p">&gt;</b>{{ item.mentor.professionalExperience }}<b class="p">&lt;/</b><b class="t">p</b><b class="p">&gt;</b></div>
<div class="ln" style="top:513px">28</div>
<i class="g" style="left:70px;top:513px"></i>
<i class="g" style="left:87px;top:513px"></i>
<i class="g" style="left:104px;top:513px"></i>
<i class="g" style="left:121px;top:513px"></i>
<div class="cl" style="top:513px">        <b class="p">&lt;</b><b class="t">p</b><b class="p">&gt;</b>{{ item.mentor.qualification }}<b class="p">&lt;/</b><b class="t">p</b><b class="p">&gt;</b></div>
</div>
<!-- minimap + ruler -->
<div class="abs" style="left:505px;top:57px;width:59px;height:556px;background:#002b36;box-shadow:-3px 0 4px -1px rgba(0,0,0,.45)"></div>
<svg class="abs" style="left:511px;top:58px" width="52" height="61" viewBox="0 0 52 38" preserveAspectRatio="none">
<g stroke-width="1" opacity=".5">
<path d="M0 .5h14" stroke="#268bd2"/><path d="M15 .5h14" stroke="#2aa198"/>
<path d="M1 1.800h7" stroke="#268bd2"/>
<path d="M2 3.100h5" stroke="#268bd2"/><path d="M7.500 3.100h3" stroke="#93a1a1"/><path d="M11 3.100h5" stroke="#268bd2"/>
<path d="M1 4.400h7" stroke="#268bd2"/>
<path d="M0 5.700h6" stroke="#268bd2"/>
<path d="M0 8.300h6" stroke="#268bd2"/>
<path d="M1 9.600h3" stroke="#268bd2"/><path d="M4.500 9.600h3" stroke="#93a1a1"/><path d="M8 9.600h7" stroke="#2aa198"/>
<path d="M2 10.900h5" stroke="#268bd2"/>
<path d="M3 12.200h6" stroke="#268bd2"/><path d="M9.500 12.200h6" stroke="#93a1a1"/><path d="M16 12.200h36" stroke="#2aa198"/>
<path d="M4 13.500h9" stroke="#268bd2"/><path d="M13.500 13.500h4" stroke="#93a1a1"/><path d="M18 13.500h34" stroke="#2aa198"/>
<path d="M5 14.800h9" stroke="#93a1a1"/>
<path d="M4 16.100h10" stroke="#268bd2"/>
<path d="M3 17.400h6" stroke="#268bd2"/>
<path d="M2 18.700h5" stroke="#268bd2"/>
<path d="M1 20h3" stroke="#268bd2"/>
<path d="M1 22.600h5" stroke="#268bd2"/>
<path d="M2 23.900h40" stroke="#586e75"/>
<path d="M2 25.200h5" stroke="#268bd2"/><path d="M7.500 25.200h8" stroke="#93a1a1"/><path d="M16 25.200h30" stroke="#2aa198"/>
<path d="M3 26.500h6" stroke="#268bd2"/><path d="M9.500 26.500h7" stroke="#2aa198"/>
<path d="M4 27.800h34" stroke="#586e75"/>
<path d="M4 29.100h2" stroke="#268bd2"/><path d="M6.500 29.100h12" stroke="#2aa198"/><path d="M19 29.100h10" stroke="#2aa198"/>
<path d="M3 30.400h6" stroke="#268bd2"/>
<path d="M3 31.700h3" stroke="#268bd2"/>
<path d="M4 33h2" stroke="#268bd2"/><path d="M6 33h12" stroke="#93a1a1"/>
<path d="M4 34.300h2" stroke="#268bd2"/><path d="M6 34.300h22" stroke="#93a1a1"/>
<path d="M4 35.600h2" stroke="#268bd2"/><path d="M6 35.600h16" stroke="#93a1a1"/>
<path d="M3 36.900h4M2 38h6" stroke="#268bd2"/>
</g></svg>
<div class="abs" style="left:564px;top:57px;width:1px;height:555px;background:#24454f"></div>
<div class="abs" style="left:565px;top:211.500px;width:13px;height:2px;background:#d0202a"></div>
<!-- find widget -->
<div class="abs" style="left:70.500px;top:57px;width:419px;height:33px;background:#00212b;box-shadow:0 2px 8px 1px rgba(0,0,0,.55);border-left:3px solid #6f6a55"></div>
<svg class="abs" style="left:79px;top:68px" width="8" height="12" viewBox="0 0 8 12" fill="none" stroke="#c5cdce" stroke-width="1.200"><path d="M1.500 1L6.500 6l-5 5"/></svg>
<div class="abs" style="left:92px;top:61px;width:223px;height:24px;background:#003847"></div>
<div class="abs nw" style="left:99px;top:61px;font-size:12.300px;line-height:24px;color:#93a1a1">ion-item ion-select</div>
<div class="abs nw" style="left:253px;top:61px;font-size:10.500px;line-height:25px;color:#c5cdce">Aa</div>
<div class="abs nw" style="left:275px;top:60px;font-size:10.500px;line-height:24px;color:#c5cdce;text-decoration:underline">ab</div>
<div class="abs" style="left:273px;top:75px;width:1px;height:4px;background:#c5cdce"></div><div class="abs" style="left:290px;top:75px;width:1px;height:4px;background:#c5cdce"></div>
<div class="abs" style="left:297px;top:75px;width:4px;height:4px;background:#c5cdce"></div>
<div class="abs nw mono" style="left:302px;top:59px;font-size:13px;line-height:24px;color:#c5cdce">*</div>
<div class="abs nw" style="left:320px;top:61px;font-size:11.400px;line-height:24px;color:#d2d8d8">No results</div>
<svg class="abs" style="left:396px;top:66px" width="12" height="14" viewBox="0 0 12 14" fill="none" stroke="#6f8389" stroke-width="1.200"><path d="M6 13V1.500M1 6.500l5-5 5 5"/></svg>
<svg class="abs" style="left:420px;top:66px" width="12" height="14" viewBox="0 0 12 14" fill="none" stroke="#6f8389" stroke-width="1.200"><path d="M6 1v11.500M1 7.500l5 5 5-5"/></svg>
<svg class="abs" style="left:443px;top:68px" width="15" height="11" viewBox="0 0 15 11" stroke="#c5cdce" stroke-width="1.200"><path d="M0 1h15M0 5.500h15M0 10h10"/></svg>
<svg class="abs" style="left:470px;top:68px" width="10" height="10" viewBox="0 0 10 10" stroke="#c5cdce" stroke-width="1.200"><path d="M.5.500l9 9M9.500.500l-9 9"/></svg>
</div><!-- /ed -->
<style>
#pn{left:350px;top:674px;width:578px;height:347px;background:#002b36;border-top:1px solid #2b2b4a;overflow:hidden}
#pn .pt{position:absolute;top:0;height:37px;line-height:38px;font-size:10.300px;color:#8c9b9d;white-space:nowrap;letter-spacing:.1px}
#pn svg{position:absolute}
#term{left:20px;top:41px;width:560px;font-family:"DejaVu Sans Mono","Liberation Mono",monospace;font-size:14px;letter-spacing:-.43px;line-height:16px;white-space:pre;color:#b5bfc0}
#term b{color:#e9eeee}
#term i{font-style:normal;color:#6d8087}
</style>
<div id="pn" class="abs"><div class="abs" style="left:0;top:-1px;width:578px;height:347px">
  <span class="pt" style="left:20px">PROBLEMS</span>
  <div class="abs" style="left:87px;top:10px;width:18px;height:18px;border-radius:50%;background:#2a88cc;color:#fff;font-size:10px;line-height:18px;text-align:center">1</div>
  <span class="pt" style="left:127px">OUTPUT</span>
  <span class="pt" style="left:195px;color:#e4e9e9">TERMINAL</span>
  <div class="abs" style="left:193px;top:30px;width:58px;height:1px;background:#e4e9e9"></div>
  <span class="pt" style="left:273px">DEBUG CONSOLE</span>
  <svg style="left:384px;top:11px" width="15" height="15" viewBox="0 0 15 15" fill="none" stroke="#c5cdce" stroke-width="1.100"><rect x=".6" y=".6" width="13.800" height="13.800" rx="1"/><path d="M4.500 4.500L8 7.500l-3.500 3"/></svg>
  <span class="pt" style="left:403px;font-size:11.300px;color:#b5bfc0;letter-spacing:0">ng</span>
  <svg style="left:428px;top:12px" width="13" height="13" viewBox="0 0 13 13" stroke="#c5cdce" stroke-width="1.200"><path d="M6.500 0v13M0 6.500h13"/></svg>
  <svg style="left:447px;top:16px" width="9" height="6" viewBox="0 0 9 6" fill="none" stroke="#c5cdce" stroke-width="1.100"><path d="M.8.800L4.500 4.500 8.200.8"/></svg>
  <svg style="left:467px;top:11px" width="14" height="14" viewBox="0 0 15 15" fill="none" stroke="#c5cdce" stroke-width="1.200"><rect x="1" y="1.500" width="13" height="12" rx="1"/><path d="M7.500 1.500v12"/></svg>
  <svg style="left:493px;top:11px" width="12" height="14" viewBox="0 0 12 14" fill="none" stroke="#c5cdce" stroke-width="1.100"><path d="M0 3h12M4 3V1h4v2M1.500 3l.5 10.500h8L10.500 3M4.300 5.500v5.500M6 5.500v5.500M7.700 5.500v5.500"/></svg>
  <svg style="left:520px;top:17px" width="14" height="3" viewBox="0 0 14 3" fill="#c5cdce"><circle cx="1.500" cy="1.500" r="1.100"/><circle cx="7" cy="1.500" r="1.100"/><circle cx="12.500" cy="1.500" r="1.100"/></svg>
  <svg style="left:547px;top:15px" width="11" height="7" viewBox="0 0 11 7" fill="none" stroke="#c5cdce" stroke-width="1.100"><path d="M.8 6L5.500 1.200 10.200 6"/></svg>
  <svg style="left:571px;top:13px" width="10" height="10" viewBox="0 0 10 10" stroke="#c5cdce" stroke-width="1.200"><path d="M.5.500l9 9M9.500.500l-9 9"/></svg>
  <div id="term" class="abs"><span style="color:#98a81c">✔</span> Browser application bundle generation complete.

<b>Initial Chunk Files</b>                        <i>|</i> <b>Names</b>
       <i>|</i>  <b>Raw Size</b>
<i>runtime.js</i>                                 <i>|</i> runtime
       <i>|</i>  14.11 kB <i>|</i>

<b>Lazy Chunk Files</b>                           <i>|</i> <b>Names</b>
       <i>|</i>  <b>Raw Size</b>
<i>src_app_pages_mentors_mentors_module_ts.js</i> <i>|</i> pages-mentors-mentors-
module <i>|</i> 204.17 kB <i>|</i>

60 unchanged chunks

Build at: <b>2023-08-31T05:16:03.305Z</b> - Hash: <b>8e1f1636df95b46c</b> - Time:
 <b>1444</b>ms

<span style="color:#d5dbdb">✔</span> Compiled successfully.
</div>
  <div class="abs" style="left:20px;top:329.500px;width:8px;height:15px;border:1px solid #d5dbdb"></div>
  <!-- scrollbar marks -->
  <div class="abs" style="left:574px;top:41px;width:4px;height:6px;background:#e0454f"></div>
  <div class="abs" style="left:574px;top:73px;width:4px;height:6px;background:#e0454f"></div>
  <div class="abs" style="left:574px;top:188px;width:4px;height:7px;background:#e0454f"></div>
  <div class="abs" style="left:567px;top:188px;width:3px;height:7px;background:#3f8fd0"></div>
  <div class="abs" style="left:567px;top:255px;width:3px;height:6px;background:#3f8fd0"></div>
</div></div>
</div><!-- /vsc -->
</div>
</body>
</html>
